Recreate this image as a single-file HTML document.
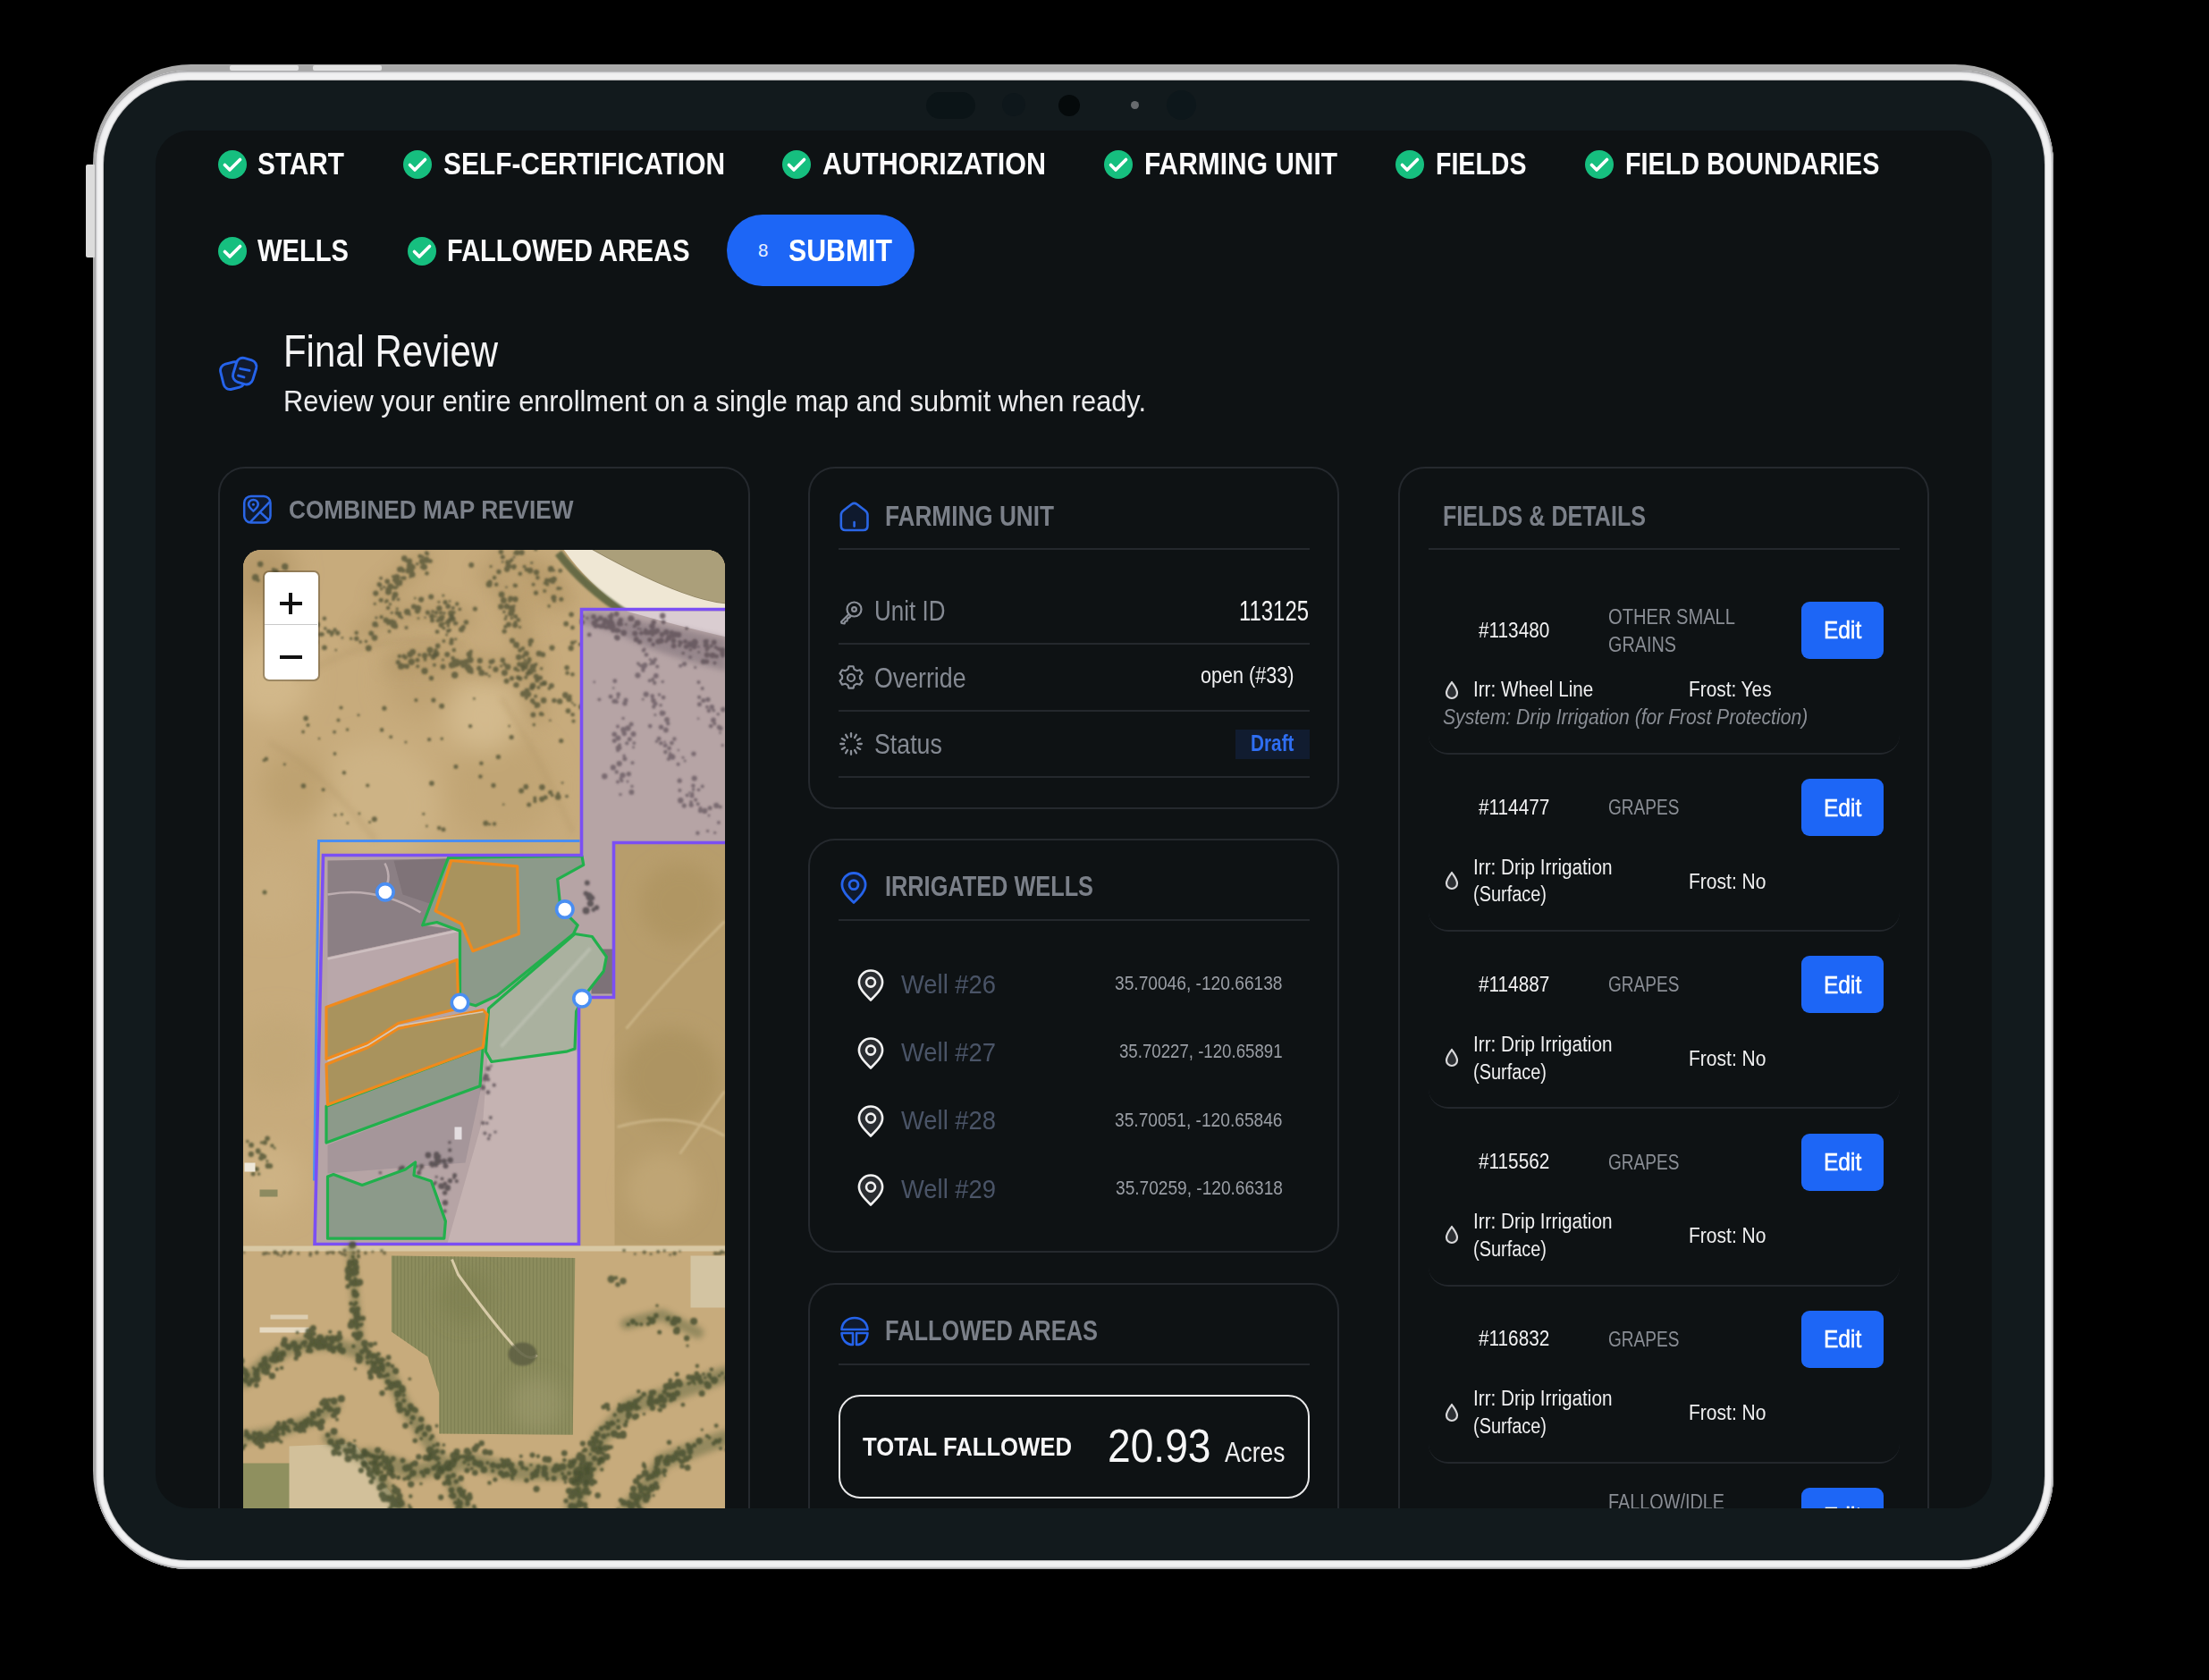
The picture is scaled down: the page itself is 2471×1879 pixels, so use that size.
<!DOCTYPE html>
<html><head><meta charset="utf-8"><style>
html,body{margin:0;padding:0}
body{width:2471px;height:1879px;background:#000;position:relative;overflow:hidden;font-family:"Liberation Sans", sans-serif}
.abs{position:absolute}
.t{position:absolute;white-space:nowrap;line-height:1;transform-origin:0 0}
#screen{position:absolute;left:174px;top:146px;width:2054px;height:1541px;border-radius:38px;background:#0e1214;overflow:hidden}
.card{position:absolute;border:2px solid #25292e;border-radius:30px;box-sizing:border-box}
.hr{position:absolute;height:2px;background:#24282d}
.chk{position:absolute;width:32px;height:32px;border-radius:50%;background:#16bf7f}
.chk svg{position:absolute;left:0;top:0}
.edit{position:absolute;width:92px;height:64px;border-radius:9px;background:#1d66f6}
</style></head><body>
<div class="abs" style="left:103.5px;top:72px;width:2193.5px;height:1683px;border-radius:110px;background:#ababab"></div>
<div class="abs" style="left:257px;top:73px;width:77px;height:6px;background:#e2e2e2;border-radius:2px"></div>
<div class="abs" style="left:350px;top:73px;width:77px;height:6px;background:#e2e2e2;border-radius:2px"></div>
<div class="abs" style="left:96px;top:184px;width:11px;height:104px;background:#dcdcdc;border-radius:2px"></div>
<div class="abs" style="left:105.5px;top:79px;width:2191.5px;height:1676px;border-radius:104px;background:#f1f1f2;box-shadow:inset 0 0 1px 1.5px #a5a5a7, inset 0 0 2px 3px #e2e2e4"></div>
<div class="abs" style="left:116px;top:89.5px;width:2170.5px;height:1655px;border-radius:94px;background:#121a1d;box-shadow:0 0 1px 1px #b8b8ba"></div>
<div class="abs" style="left:1036px;top:103px;width:55px;height:30px;border-radius:15px;background:#0b1417"></div>
<div class="abs" style="left:1121px;top:104px;width:26px;height:26px;border-radius:50%;background:#0e171b"></div>
<div class="abs" style="left:1184px;top:106px;width:24px;height:24px;border-radius:50%;background:#050a0b"></div>
<div class="abs" style="left:1264.5px;top:113px;width:9px;height:9px;border-radius:50%;background:#676b6e"></div>
<div class="abs" style="left:1304.5px;top:100.5px;width:33px;height:33px;border-radius:50%;background:#0d171b"></div>
<div id="screen">
<div class="chk" style="left:69.5px;top:22.0px"><svg width="32" height="32" viewBox="0 0 32 32"><path d="M7.5 16.5 L13 22 L24.5 10.5" fill="none" stroke="#fff" stroke-width="3.6" stroke-linecap="round" stroke-linejoin="round"/></svg></div>
<div class="t" id="s_start" style="left:114.4px;top:20.3px;font-size:34.50px;font-weight:700;color:#fbfbfc;transform:scaleX(0.8627);">START</div>
<div class="chk" style="left:276.6px;top:22.0px"><svg width="32" height="32" viewBox="0 0 32 32"><path d="M7.5 16.5 L13 22 L24.5 10.5" fill="none" stroke="#fff" stroke-width="3.6" stroke-linecap="round" stroke-linejoin="round"/></svg></div>
<div class="t" id="s_self" style="left:321.5px;top:20.3px;font-size:34.50px;font-weight:700;color:#fbfbfc;transform:scaleX(0.8666);">SELF-CERTIFICATION</div>
<div class="chk" style="left:701.0px;top:22.0px"><svg width="32" height="32" viewBox="0 0 32 32"><path d="M7.5 16.5 L13 22 L24.5 10.5" fill="none" stroke="#fff" stroke-width="3.6" stroke-linecap="round" stroke-linejoin="round"/></svg></div>
<div class="t" id="s_auth" style="left:746.0px;top:20.3px;font-size:34.50px;font-weight:700;color:#fbfbfc;transform:scaleX(0.8834);">AUTHORIZATION</div>
<div class="chk" style="left:1061.4px;top:22.0px"><svg width="32" height="32" viewBox="0 0 32 32"><path d="M7.5 16.5 L13 22 L24.5 10.5" fill="none" stroke="#fff" stroke-width="3.6" stroke-linecap="round" stroke-linejoin="round"/></svg></div>
<div class="t" id="s_farm" style="left:1106.3px;top:20.3px;font-size:34.50px;font-weight:700;color:#fbfbfc;transform:scaleX(0.8669);">FARMING UNIT</div>
<div class="chk" style="left:1387.4px;top:22.0px"><svg width="32" height="32" viewBox="0 0 32 32"><path d="M7.5 16.5 L13 22 L24.5 10.5" fill="none" stroke="#fff" stroke-width="3.6" stroke-linecap="round" stroke-linejoin="round"/></svg></div>
<div class="t" id="s_fields" style="left:1432.3px;top:20.3px;font-size:34.50px;font-weight:700;color:#fbfbfc;transform:scaleX(0.8274);">FIELDS</div>
<div class="chk" style="left:1598.5px;top:22.0px"><svg width="32" height="32" viewBox="0 0 32 32"><path d="M7.5 16.5 L13 22 L24.5 10.5" fill="none" stroke="#fff" stroke-width="3.6" stroke-linecap="round" stroke-linejoin="round"/></svg></div>
<div class="t" id="s_fb" style="left:1643.8px;top:20.3px;font-size:34.50px;font-weight:700;color:#fbfbfc;transform:scaleX(0.8336);">FIELD BOUNDARIES</div>
<div class="chk" style="left:69.5px;top:119.0px"><svg width="32" height="32" viewBox="0 0 32 32"><path d="M7.5 16.5 L13 22 L24.5 10.5" fill="none" stroke="#fff" stroke-width="3.6" stroke-linecap="round" stroke-linejoin="round"/></svg></div>
<div class="t" id="s_wells" style="left:114.4px;top:117.1px;font-size:34.50px;font-weight:700;color:#fbfbfc;transform:scaleX(0.8448);">WELLS</div>
<div class="chk" style="left:281.8px;top:119.0px"><svg width="32" height="32" viewBox="0 0 32 32"><path d="M7.5 16.5 L13 22 L24.5 10.5" fill="none" stroke="#fff" stroke-width="3.6" stroke-linecap="round" stroke-linejoin="round"/></svg></div>
<div class="t" id="s_fall" style="left:326.3px;top:117.1px;font-size:34.50px;font-weight:700;color:#fbfbfc;transform:scaleX(0.8418);">FALLOWED AREAS</div>
<div class="abs" style="left:638.6px;top:94.3px;width:210px;height:80px;border-radius:40px;background:#1d66f6"></div>
<div class="t" id="s_8" style="left:674.0px;top:124.2px;font-size:20.50px;font-weight:400;color:#e8efff;transform:scaleX(1.0000);">8</div>
<div class="t" id="s_submit" style="left:708.0px;top:117.1px;font-size:34.50px;font-weight:700;color:#ffffff;transform:scaleX(0.8771);">SUBMIT</div>
<svg class="abs" style="left:64px;top:242px" width="60" height="60" viewBox="0 0 60 60">
<g fill="none" stroke="#2563eb" stroke-width="2.9" stroke-linejoin="round" stroke-linecap="round">
<rect x="10.1" y="17.6" width="24" height="29" rx="7.5" transform="rotate(-14 22.1 32.1)" fill="#0f1a2e"/>
<rect x="24.2" y="13.1" width="23" height="28" rx="7.5" transform="rotate(17 35.7 27.1)" fill="#111a2e"/>
<path d="M30.7 24.3 L41 26.4 M28.6 32.1 L35 33.9"/>
</g></svg>
<div class="t" id="h_title" style="left:143.0px;top:222.3px;font-size:49.50px;font-weight:400;color:#f4f4f5;transform:scaleX(0.8470);">Final Review</div>
<div class="t" id="h_sub" style="left:143.0px;top:287.2px;font-size:32.50px;font-weight:400;color:#ececee;transform:scaleX(0.9460);">Review your entire enrollment on a single map and submit when ready.</div>
<div class="card" style="left:70.0px;top:376.0px;width:594.5px;height:1278.0px"></div>
<div class="card" style="left:729.5px;top:376.0px;width:594.5px;height:382.5px"></div>
<div class="card" style="left:729.5px;top:792.0px;width:594.5px;height:463.0px"></div>
<div class="card" style="left:729.5px;top:1289.0px;width:594.5px;height:365.0px"></div>
<div class="card" style="left:1389.5px;top:376.0px;width:594.5px;height:1278.0px"></div>
<svg class="abs" style="left:92px;top:402px" width="44" height="44" viewBox="0 0 44 44">
<g fill="none" stroke="#2a66e6" stroke-width="2.5" stroke-linejoin="round" stroke-linecap="round">
<rect x="7.2" y="7" width="29.3" height="29.5" rx="7.5" fill="#0f1a2e"/>
<path d="M17.4 23.6 C14 20.5 12.1 18.4 12.1 16.2 A5.3 5.3 0 0 1 22.7 16.2 C22.7 18.4 20.8 20.5 17.4 23.6 Z"/>
<path d="M14.1 35.9 L35.9 13.1 M25.1 24.9 L33.8 33"/>
</g><circle cx="17.4" cy="16.2" r="1.5" fill="#2a66e6"/></svg>
<div class="t" id="c_map" style="left:148.6px;top:408.5px;font-size:29.50px;font-weight:700;color:#7b8089;transform:scaleX(0.8889);">COMBINED MAP REVIEW</div>
<div id="map" class="abs" style="left:97.5px;top:468.5px;width:539px;height:1100px;border-radius:20px 20px 0 0;overflow:hidden;background:#c6ab7c"><svg width="539" height="1073" viewBox="0 0 539 1073" style="position:absolute;left:0;top:0"><defs><filter id="bl" x="-50%" y="-50%" width="200%" height="200%"><feGaussianBlur stdDeviation="14"/></filter><filter id="bl2" x="-10%" y="-10%" width="120%" height="120%"><feGaussianBlur stdDeviation="0.9"/></filter><filter id="bl3" x="-30%" y="-30%" width="160%" height="160%"><feGaussianBlur stdDeviation="3"/></filter><filter id="bl4" x="-30%" y="-30%" width="160%" height="160%"><feGaussianBlur stdDeviation="10"/></filter></defs><rect x="0" y="0" width="539" height="1073" fill="#c7ab7c"/><g filter="url(#bl)"><circle cx="18.5" cy="25.5" r="40" fill="#b69a6a"/><circle cx="28.5" cy="145.5" r="45" fill="#d2b88a"/><circle cx="148.5" cy="285.5" r="70" fill="#cdb385"/><circle cx="288.5" cy="265.5" r="60" fill="#c1a575"/><circle cx="268.5" cy="185.5" r="40" fill="#d3ba8d"/><circle cx="58.5" cy="265.5" r="40" fill="#bea271"/><circle cx="328.5" cy="45.5" r="30" fill="#c0a372"/><circle cx="198.5" cy="145.5" r="40" fill="#bfa373"/><circle cx="28.5" cy="385.5" r="40" fill="#c9ae80"/><circle cx="38.5" cy="565.5" r="45" fill="#c3a878"/><circle cx="28.5" cy="705.5" r="40" fill="#cdb284"/></g><g filter="url(#bl3)" stroke="#b09466" stroke-width="6" fill="none" opacity="0.3"><path d="M58.5,145.5 Q148.5,85.5 248.5,105.5"/><path d="M288.5,165.5 Q328.5,225.5 368.5,315.5"/><path d="M28.5,215.5 Q88.5,245.5 148.5,325.5"/></g><path d="M389.5,-0.5 L540.5,-0.5 L540.5,60.5 Q491.5,56.5 389.5,-0.5Z" fill="#ab9f7a"/><path d="M389.5,-0.5 Q491.5,56.5 540.5,60.5" fill="none" stroke="#8d8160" stroke-width="1.6"/><path d="M358.5,-0.5 L389.5,-0.5 Q491.5,56.5 540.5,60.5 L540.5,69.5 L428.5,69.5 Q383.5,35.5 358.5,-0.5Z" fill="#efe7d4"/><path d="M352.5,3.5 Q380.5,40.5 428.5,71.5" fill="none" stroke="#56603c" stroke-width="9" opacity="0.85" filter="url(#bl2)"/><g filter="url(#bl4)" fill="none" stroke="#a98e5e" stroke-linecap="round" opacity="0.45"><path d="M153.5,53.5 L178.5,30.5 L200.5,10.5" stroke-width="22"/><path d="M133.5,90.5 L168.5,75.5 L208.5,67.5 L248.5,77.5" stroke-width="22"/><path d="M168.5,125.5 L208.5,120.5 L248.5,127.5 L288.5,133.5 L328.5,127.5" stroke-width="22"/><path d="M273.5,25.5 L298.5,55.5 L313.5,100.5 L320.5,155.5 L328.5,185.5" stroke-width="22"/><path d="M288.5,5.5 L318.5,17.5 L343.5,35.5 L358.5,55.5" stroke-width="22"/></g><g filter="url(#bl2)"><g fill="#56563a" opacity="0.8"><circle cx="205.1" cy="3.6" r="2.3"/><circle cx="148.3" cy="48.5" r="3.1"/><circle cx="170.1" cy="50.0" r="3.3"/><circle cx="162.3" cy="44.5" r="3.0"/><circle cx="170.3" cy="37.0" r="1.4"/><circle cx="169.6" cy="33.6" r="2.7"/><circle cx="161.2" cy="35.2" r="2.8"/><circle cx="185.5" cy="22.3" r="3.4"/><circle cx="169.2" cy="41.9" r="2.0"/><circle cx="170.2" cy="42.6" r="2.0"/><circle cx="177.6" cy="31.3" r="1.8"/><circle cx="172.2" cy="41.8" r="1.5"/><circle cx="172.6" cy="38.6" r="2.1"/><circle cx="199.1" cy="18.9" r="1.5"/><circle cx="154.6" cy="43.7" r="1.7"/><circle cx="179.0" cy="23.6" r="2.2"/><circle cx="189.0" cy="27.5" r="3.5"/><circle cx="204.9" cy="11.1" r="3.6"/><circle cx="159.1" cy="58.5" r="1.3"/><circle cx="194.7" cy="15.7" r="1.8"/><circle cx="147.3" cy="60.3" r="1.6"/><circle cx="201.4" cy="19.1" r="2.7"/><circle cx="200.7" cy="7.5" r="1.7"/><circle cx="164.5" cy="42.9" r="1.5"/><circle cx="173.5" cy="55.4" r="1.8"/><circle cx="188.4" cy="16.9" r="2.0"/><circle cx="180.3" cy="31.6" r="2.4"/><circle cx="164.6" cy="44.7" r="1.3"/><circle cx="187.6" cy="24.4" r="1.9"/><circle cx="160.7" cy="57.2" r="2.1"/><circle cx="175.3" cy="36.3" r="2.1"/><circle cx="209.5" cy="12.6" r="2.4"/><circle cx="188.3" cy="24.1" r="2.6"/><circle cx="175.1" cy="21.9" r="3.1"/><circle cx="180.3" cy="9.6" r="3.3"/><circle cx="207.4" cy="13.2" r="1.3"/><circle cx="189.5" cy="23.1" r="1.5"/><circle cx="186.6" cy="22.9" r="2.2"/><circle cx="189.7" cy="19.2" r="3.0"/><circle cx="162.5" cy="47.1" r="3.5"/><circle cx="154.1" cy="31.7" r="1.9"/><circle cx="168.7" cy="52.6" r="2.5"/><circle cx="179.2" cy="22.6" r="2.1"/><circle cx="171.4" cy="31.9" r="3.4"/><circle cx="157.8" cy="41.6" r="1.6"/><circle cx="187.8" cy="22.3" r="1.4"/><circle cx="202.6" cy="19.2" r="3.4"/><circle cx="176.5" cy="21.5" r="2.9"/><circle cx="188.2" cy="19.1" r="2.7"/><circle cx="186.6" cy="30.6" r="1.3"/><circle cx="168.0" cy="55.3" r="1.9"/><circle cx="176.9" cy="34.8" r="1.6"/><circle cx="197.7" cy="7.1" r="2.4"/><circle cx="171.6" cy="28.4" r="1.4"/><circle cx="154.2" cy="56.2" r="2.5"/><circle cx="167.3" cy="29.7" r="1.5"/><circle cx="172.0" cy="30.7" r="3.4"/><circle cx="185.9" cy="12.7" r="3.2"/><circle cx="185.9" cy="17.4" r="3.0"/><circle cx="174.7" cy="37.0" r="3.5"/><circle cx="184.0" cy="24.0" r="2.5"/><circle cx="153.1" cy="39.6" r="2.4"/><circle cx="163.9" cy="43.0" r="1.4"/><circle cx="200.4" cy="12.8" r="3.6"/><circle cx="182.2" cy="12.4" r="1.5"/><circle cx="152.2" cy="38.6" r="2.6"/><circle cx="171.5" cy="34.0" r="2.0"/><circle cx="206.1" cy="4.4" r="2.0"/><circle cx="168.7" cy="29.8" r="1.8"/><circle cx="164.8" cy="40.9" r="3.5"/></g><g fill="#56563a" opacity="0.8"><circle cx="222.0" cy="70.1" r="1.6"/><circle cx="166.8" cy="84.1" r="2.3"/><circle cx="175.2" cy="74.0" r="2.3"/><circle cx="196.0" cy="76.6" r="1.4"/><circle cx="174.0" cy="72.8" r="1.7"/><circle cx="131.2" cy="102.9" r="1.9"/><circle cx="172.2" cy="70.6" r="2.5"/><circle cx="192.3" cy="54.1" r="1.4"/><circle cx="220.4" cy="70.8" r="1.8"/><circle cx="231.0" cy="78.3" r="2.5"/><circle cx="244.2" cy="89.1" r="3.2"/><circle cx="137.4" cy="102.4" r="1.8"/><circle cx="168.5" cy="81.6" r="3.0"/><circle cx="166.5" cy="80.0" r="2.5"/><circle cx="203.6" cy="75.7" r="1.3"/><circle cx="144.2" cy="93.5" r="2.1"/><circle cx="229.2" cy="63.1" r="2.9"/><circle cx="159.8" cy="78.7" r="3.1"/><circle cx="225.0" cy="70.8" r="1.7"/><circle cx="143.1" cy="93.4" r="2.8"/><circle cx="219.5" cy="65.4" r="3.1"/><circle cx="177.4" cy="75.7" r="1.8"/><circle cx="164.4" cy="60.7" r="1.7"/><circle cx="170.5" cy="85.8" r="2.7"/><circle cx="168.3" cy="84.4" r="3.1"/><circle cx="259.4" cy="66.0" r="2.6"/><circle cx="165.5" cy="81.4" r="1.9"/><circle cx="162.1" cy="64.9" r="2.2"/><circle cx="199.1" cy="55.6" r="3.1"/><circle cx="182.5" cy="87.0" r="2.0"/><circle cx="126.8" cy="99.3" r="2.7"/><circle cx="149.6" cy="84.8" r="1.8"/><circle cx="183.5" cy="69.3" r="3.6"/><circle cx="222.9" cy="75.1" r="2.6"/><circle cx="154.6" cy="75.1" r="2.2"/><circle cx="159.4" cy="78.1" r="1.9"/><circle cx="195.7" cy="65.3" r="3.5"/><circle cx="249.4" cy="81.0" r="2.8"/><circle cx="232.5" cy="71.0" r="3.4"/><circle cx="162.5" cy="81.8" r="2.5"/><circle cx="218.7" cy="65.3" r="2.5"/><circle cx="212.0" cy="68.9" r="1.9"/><circle cx="195.0" cy="68.3" r="3.1"/><circle cx="217.6" cy="79.1" r="2.2"/><circle cx="221.2" cy="76.9" r="3.5"/><circle cx="163.5" cy="91.1" r="1.9"/><circle cx="147.0" cy="98.3" r="3.4"/><circle cx="172.2" cy="65.9" r="1.6"/><circle cx="236.9" cy="82.4" r="2.1"/><circle cx="126.7" cy="92.8" r="2.3"/><circle cx="190.9" cy="63.5" r="3.0"/><circle cx="166.3" cy="70.3" r="1.6"/><circle cx="194.5" cy="63.9" r="1.9"/><circle cx="235.9" cy="69.8" r="1.9"/><circle cx="140.3" cy="110.0" r="3.4"/><circle cx="216.0" cy="70.3" r="2.3"/><circle cx="211.1" cy="74.2" r="3.0"/><circle cx="217.1" cy="91.6" r="2.4"/><circle cx="169.6" cy="84.8" r="3.2"/><circle cx="147.5" cy="83.3" r="3.2"/><circle cx="148.9" cy="75.9" r="1.6"/><circle cx="163.5" cy="80.2" r="2.6"/><circle cx="246.2" cy="86.4" r="2.6"/><circle cx="206.4" cy="70.1" r="2.6"/><circle cx="186.6" cy="72.4" r="1.3"/><circle cx="175.3" cy="71.0" r="2.0"/><circle cx="231.3" cy="89.7" r="1.8"/><circle cx="234.9" cy="77.7" r="2.9"/><circle cx="242.3" cy="66.4" r="1.9"/><circle cx="238.3" cy="82.1" r="2.2"/></g><g fill="#56563a" opacity="0.8"><circle cx="212.6" cy="119.7" r="3.0"/><circle cx="319.9" cy="122.0" r="2.3"/><circle cx="237.9" cy="124.7" r="3.2"/><circle cx="281.4" cy="134.7" r="1.7"/><circle cx="279.8" cy="123.0" r="1.5"/><circle cx="282.5" cy="133.7" r="3.1"/><circle cx="249.3" cy="125.1" r="3.2"/><circle cx="300.5" cy="143.7" r="2.6"/><circle cx="294.6" cy="146.8" r="3.0"/><circle cx="308.9" cy="128.0" r="2.8"/><circle cx="189.7" cy="114.2" r="3.4"/><circle cx="335.3" cy="117.2" r="2.9"/><circle cx="279.3" cy="124.8" r="2.4"/><circle cx="223.5" cy="130.7" r="3.0"/><circle cx="251.5" cy="131.4" r="3.7"/><circle cx="186.6" cy="117.2" r="1.7"/><circle cx="245.0" cy="125.6" r="2.5"/><circle cx="183.1" cy="130.2" r="2.8"/><circle cx="313.0" cy="134.3" r="2.0"/><circle cx="254.0" cy="123.1" r="3.7"/><circle cx="315.6" cy="129.1" r="3.7"/><circle cx="188.2" cy="125.3" r="3.7"/><circle cx="330.9" cy="116.0" r="3.3"/><circle cx="194.9" cy="123.2" r="2.5"/><circle cx="266.7" cy="137.5" r="3.5"/><circle cx="292.4" cy="137.4" r="3.5"/><circle cx="239.5" cy="124.7" r="2.6"/><circle cx="233.4" cy="128.8" r="3.6"/><circle cx="246.2" cy="129.0" r="3.1"/><circle cx="203.1" cy="118.3" r="3.2"/><circle cx="251.0" cy="131.9" r="3.0"/><circle cx="288.6" cy="129.9" r="1.7"/><circle cx="253.7" cy="134.4" r="3.8"/><circle cx="181.6" cy="120.6" r="2.3"/><circle cx="319.1" cy="125.5" r="2.4"/><circle cx="311.2" cy="130.1" r="1.6"/><circle cx="209.0" cy="112.0" r="3.6"/><circle cx="213.9" cy="128.7" r="2.0"/><circle cx="275.9" cy="131.0" r="1.8"/><circle cx="309.7" cy="143.9" r="2.7"/><circle cx="264.0" cy="132.4" r="2.9"/><circle cx="234.5" cy="121.0" r="2.3"/><circle cx="316.4" cy="132.6" r="1.7"/><circle cx="186.7" cy="117.0" r="3.4"/><circle cx="235.8" cy="112.1" r="2.3"/><circle cx="277.3" cy="125.2" r="2.8"/><circle cx="290.3" cy="123.4" r="2.8"/><circle cx="181.2" cy="129.8" r="2.4"/><circle cx="293.8" cy="137.3" r="1.6"/><circle cx="212.9" cy="120.9" r="1.9"/><circle cx="236.7" cy="140.0" r="3.8"/><circle cx="241.3" cy="126.2" r="3.2"/><circle cx="208.7" cy="117.2" r="2.1"/><circle cx="264.8" cy="123.9" r="3.1"/><circle cx="236.0" cy="124.4" r="2.7"/><circle cx="254.8" cy="113.6" r="2.1"/><circle cx="216.0" cy="116.2" r="3.5"/><circle cx="236.1" cy="129.0" r="2.8"/><circle cx="176.6" cy="130.2" r="3.6"/><circle cx="215.4" cy="112.6" r="2.3"/><circle cx="173.3" cy="125.7" r="2.6"/><circle cx="195.2" cy="130.2" r="2.0"/><circle cx="253.0" cy="116.9" r="3.3"/><circle cx="320.5" cy="123.1" r="2.3"/><circle cx="296.0" cy="131.0" r="3.4"/><circle cx="324.1" cy="130.9" r="3.6"/><circle cx="255.7" cy="136.9" r="2.1"/><circle cx="174.8" cy="119.0" r="2.2"/><circle cx="275.4" cy="140.9" r="1.5"/><circle cx="203.0" cy="135.5" r="3.7"/><circle cx="311.2" cy="128.5" r="2.1"/><circle cx="345.5" cy="109.6" r="3.1"/><circle cx="272.0" cy="138.7" r="1.9"/><circle cx="313.8" cy="128.3" r="3.3"/><circle cx="197.0" cy="117.6" r="2.0"/><circle cx="253.0" cy="134.3" r="2.4"/><circle cx="292.4" cy="127.9" r="2.1"/><circle cx="321.5" cy="135.8" r="3.6"/><circle cx="327.7" cy="141.5" r="3.0"/><circle cx="179.8" cy="119.0" r="2.5"/></g><g fill="#56563a" opacity="0.8"><circle cx="304.7" cy="74.4" r="2.5"/><circle cx="303.2" cy="62.4" r="1.5"/><circle cx="319.0" cy="161.6" r="3.3"/><circle cx="326.4" cy="135.5" r="1.5"/><circle cx="320.3" cy="102.7" r="1.9"/><circle cx="304.2" cy="84.2" r="3.1"/><circle cx="289.1" cy="49.9" r="3.4"/><circle cx="300.4" cy="65.3" r="3.6"/><circle cx="343.4" cy="190.8" r="1.3"/><circle cx="308.1" cy="134.8" r="1.7"/><circle cx="300.4" cy="76.5" r="1.7"/><circle cx="322.0" cy="101.8" r="3.0"/><circle cx="322.7" cy="153.8" r="1.4"/><circle cx="313.7" cy="118.4" r="2.0"/><circle cx="307.9" cy="78.4" r="2.3"/><circle cx="324.4" cy="184.6" r="3.0"/><circle cx="318.8" cy="137.8" r="2.4"/><circle cx="281.1" cy="31.1" r="2.3"/><circle cx="294.9" cy="63.2" r="3.2"/><circle cx="327.5" cy="175.6" r="1.6"/><circle cx="293.4" cy="77.3" r="1.8"/><circle cx="288.3" cy="63.5" r="3.2"/><circle cx="307.3" cy="142.7" r="2.5"/><circle cx="329.1" cy="173.5" r="3.2"/><circle cx="314.5" cy="161.4" r="1.8"/><circle cx="277.1" cy="18.5" r="1.6"/><circle cx="325.3" cy="171.1" r="2.2"/><circle cx="291.4" cy="56.5" r="3.5"/><circle cx="286.0" cy="24.5" r="2.7"/><circle cx="309.6" cy="112.5" r="2.4"/><circle cx="292.2" cy="91.1" r="2.7"/><circle cx="255.2" cy="17.1" r="3.0"/><circle cx="293.4" cy="85.9" r="2.2"/><circle cx="276.0" cy="36.1" r="2.6"/><circle cx="297.0" cy="83.4" r="3.0"/><circle cx="336.1" cy="168.4" r="3.3"/><circle cx="304.4" cy="81.0" r="1.9"/><circle cx="304.8" cy="133.1" r="2.5"/><circle cx="299.6" cy="71.1" r="3.5"/><circle cx="315.3" cy="123.3" r="1.6"/><circle cx="304.4" cy="151.5" r="2.2"/><circle cx="316.2" cy="142.6" r="2.2"/><circle cx="309.5" cy="86.4" r="1.6"/><circle cx="294.3" cy="74.2" r="1.6"/><circle cx="308.3" cy="120.1" r="3.3"/><circle cx="313.1" cy="131.3" r="2.5"/><circle cx="313.2" cy="120.0" r="1.8"/><circle cx="294.5" cy="41.8" r="1.3"/><circle cx="332.4" cy="143.2" r="2.6"/><circle cx="333.6" cy="132.7" r="1.8"/><circle cx="307.0" cy="108.9" r="1.4"/><circle cx="325.3" cy="195.6" r="1.8"/><circle cx="323.0" cy="154.2" r="2.9"/><circle cx="304.1" cy="39.9" r="2.4"/><circle cx="306.7" cy="135.0" r="1.4"/><circle cx="336.4" cy="149.6" r="1.9"/><circle cx="316.7" cy="165.7" r="2.0"/><circle cx="320.9" cy="106.0" r="2.2"/><circle cx="312.8" cy="110.4" r="2.4"/><circle cx="313.4" cy="161.0" r="3.5"/><circle cx="283.2" cy="38.7" r="2.3"/><circle cx="305.5" cy="106.2" r="3.5"/><circle cx="327.1" cy="163.8" r="2.0"/><circle cx="327.6" cy="128.0" r="1.9"/><circle cx="318.3" cy="138.3" r="2.6"/><circle cx="305.6" cy="151.1" r="3.1"/><circle cx="275.1" cy="38.6" r="3.5"/><circle cx="316.6" cy="116.0" r="3.2"/><circle cx="300.9" cy="67.8" r="3.2"/><circle cx="298.1" cy="57.1" r="2.0"/><circle cx="322.7" cy="154.2" r="1.8"/><circle cx="299.1" cy="54.6" r="3.0"/><circle cx="305.1" cy="40.0" r="2.0"/><circle cx="323.6" cy="168.8" r="2.7"/><circle cx="333.2" cy="183.6" r="2.5"/><circle cx="317.4" cy="157.3" r="2.9"/><circle cx="304.4" cy="55.2" r="3.2"/><circle cx="334.9" cy="184.1" r="1.9"/><circle cx="291.9" cy="69.4" r="1.8"/><circle cx="301.0" cy="101.5" r="3.1"/></g><g fill="#56563a" opacity="0.8"><circle cx="295.8" cy="14.0" r="2.7"/><circle cx="344.0" cy="34.1" r="2.8"/><circle cx="316.9" cy="22.1" r="2.4"/><circle cx="311.6" cy="2.9" r="3.1"/><circle cx="295.1" cy="21.7" r="3.1"/><circle cx="322.8" cy="14.5" r="1.6"/><circle cx="346.3" cy="35.0" r="3.0"/><circle cx="306.3" cy="3.1" r="3.2"/><circle cx="337.7" cy="37.2" r="1.9"/><circle cx="341.7" cy="34.4" r="1.8"/><circle cx="315.0" cy="18.3" r="1.6"/><circle cx="314.2" cy="18.8" r="1.7"/><circle cx="327.3" cy="-1.0" r="2.2"/><circle cx="303.4" cy="3.9" r="1.4"/><circle cx="355.2" cy="43.1" r="1.7"/><circle cx="347.7" cy="32.8" r="3.1"/><circle cx="354.7" cy="23.3" r="2.4"/><circle cx="337.2" cy="46.1" r="2.0"/><circle cx="352.4" cy="43.2" r="2.1"/><circle cx="348.0" cy="56.7" r="2.3"/><circle cx="344.2" cy="21.4" r="3.4"/><circle cx="303.3" cy="18.2" r="2.2"/><circle cx="339.4" cy="33.6" r="2.1"/><circle cx="327.5" cy="48.1" r="2.6"/><circle cx="324.6" cy="38.8" r="2.0"/><circle cx="297.4" cy="13.0" r="1.4"/><circle cx="303.0" cy="8.1" r="1.5"/><circle cx="300.3" cy="11.3" r="2.1"/><circle cx="296.8" cy="18.2" r="3.3"/><circle cx="290.3" cy="8.1" r="2.5"/><circle cx="342.1" cy="62.9" r="1.8"/><circle cx="347.8" cy="23.2" r="1.4"/><circle cx="340.2" cy="38.6" r="2.1"/><circle cx="288.4" cy="2.2" r="2.7"/><circle cx="302.8" cy="19.1" r="2.8"/><circle cx="328.0" cy="25.2" r="3.1"/><circle cx="347.4" cy="53.4" r="3.1"/><circle cx="339.6" cy="34.7" r="2.4"/><circle cx="298.9" cy="13.6" r="1.4"/><circle cx="321.0" cy="23.1" r="3.4"/><circle cx="355.8" cy="55.2" r="2.5"/><circle cx="329.4" cy="31.1" r="2.3"/><circle cx="305.1" cy="2.1" r="1.6"/><circle cx="290.2" cy="13.4" r="1.4"/><circle cx="309.8" cy="26.7" r="2.3"/></g><g fill="#56563a" opacity="0.8"><circle cx="86.6" cy="94.6" r="2.5"/><circle cx="49.2" cy="82.0" r="3.0"/><circle cx="90.9" cy="76.7" r="2.3"/><circle cx="86.8" cy="93.7" r="1.5"/><circle cx="91.8" cy="87.9" r="1.8"/><circle cx="81.1" cy="103.2" r="2.5"/><circle cx="95.7" cy="91.2" r="2.5"/><circle cx="83.1" cy="83.6" r="2.9"/><circle cx="120.7" cy="99.3" r="1.7"/><circle cx="72.5" cy="87.1" r="2.2"/><circle cx="66.5" cy="87.0" r="2.5"/><circle cx="105.7" cy="93.0" r="2.7"/><circle cx="110.9" cy="98.3" r="1.4"/><circle cx="102.6" cy="89.5" r="2.2"/><circle cx="79.6" cy="99.9" r="1.7"/><circle cx="71.6" cy="75.1" r="2.9"/><circle cx="88.9" cy="94.6" r="2.1"/><circle cx="79.6" cy="85.5" r="1.8"/><circle cx="103.7" cy="112.1" r="1.3"/><circle cx="51.4" cy="83.3" r="2.9"/><circle cx="90.9" cy="109.3" r="2.9"/><circle cx="88.7" cy="93.7" r="1.5"/><circle cx="99.4" cy="92.8" r="2.6"/><circle cx="80.3" cy="88.1" r="1.6"/><circle cx="98.9" cy="95.4" r="1.7"/></g><g fill="#56563a" opacity="0.8"><circle cx="347.9" cy="168.4" r="2.7"/><circle cx="365.6" cy="163.6" r="2.1"/><circle cx="337.0" cy="149.1" r="3.0"/><circle cx="360.4" cy="162.3" r="3.3"/><circle cx="378.2" cy="175.6" r="3.2"/><circle cx="380.7" cy="173.6" r="3.3"/><circle cx="324.1" cy="151.8" r="3.3"/><circle cx="333.9" cy="149.9" r="2.5"/><circle cx="342.4" cy="155.1" r="2.0"/><circle cx="333.9" cy="150.4" r="1.8"/><circle cx="364.6" cy="167.1" r="3.2"/><circle cx="328.8" cy="146.0" r="2.6"/><circle cx="344.9" cy="152.0" r="3.0"/><circle cx="359.7" cy="164.1" r="1.5"/><circle cx="363.5" cy="180.1" r="2.9"/><circle cx="370.8" cy="173.5" r="1.5"/><circle cx="354.2" cy="169.4" r="3.2"/><circle cx="330.4" cy="153.9" r="2.1"/><circle cx="359.3" cy="164.3" r="1.5"/><circle cx="361.7" cy="165.0" r="1.5"/><circle cx="381.5" cy="184.6" r="2.4"/><circle cx="368.2" cy="171.1" r="1.4"/><circle cx="368.6" cy="184.2" r="2.3"/><circle cx="337.0" cy="149.3" r="2.7"/><circle cx="369.5" cy="191.6" r="2.1"/></g><g fill="#56563a" opacity="0.8"><circle cx="227.7" cy="95.0" r="1.6"/><circle cx="218.9" cy="58.3" r="1.5"/><circle cx="233.2" cy="100.7" r="2.5"/><circle cx="223.5" cy="122.9" r="1.5"/><circle cx="221.4" cy="84.0" r="2.9"/><circle cx="239.6" cy="129.4" r="1.4"/><circle cx="231.1" cy="57.4" r="1.3"/><circle cx="234.8" cy="65.0" r="2.1"/><circle cx="223.8" cy="51.0" r="1.6"/><circle cx="228.2" cy="116.9" r="3.0"/><circle cx="233.3" cy="75.0" r="2.9"/><circle cx="211.5" cy="79.0" r="2.5"/><circle cx="229.2" cy="90.7" r="2.3"/><circle cx="210.2" cy="52.4" r="3.0"/><circle cx="224.4" cy="87.5" r="2.1"/><circle cx="214.7" cy="117.5" r="2.9"/><circle cx="224.4" cy="102.1" r="2.0"/><circle cx="217.7" cy="107.4" r="2.8"/><circle cx="226.1" cy="58.5" r="2.6"/><circle cx="215.7" cy="74.6" r="1.4"/><circle cx="224.4" cy="82.4" r="1.7"/><circle cx="239.2" cy="60.5" r="2.2"/><circle cx="232.8" cy="104.1" r="2.6"/><circle cx="205.5" cy="26.2" r="2.3"/><circle cx="203.5" cy="122.7" r="2.0"/><circle cx="229.4" cy="85.2" r="1.7"/><circle cx="229.0" cy="80.9" r="3.0"/><circle cx="210.5" cy="143.5" r="2.7"/><circle cx="237.8" cy="99.7" r="1.5"/><circle cx="221.7" cy="85.1" r="1.9"/></g><g fill="#56563a" opacity="0.8"><circle cx="109.5" cy="176.5" r="2.1"/><circle cx="116.6" cy="201.1" r="1.8"/><circle cx="201.8" cy="295.3" r="1.6"/><circle cx="237.9" cy="242.5" r="2.5"/><circle cx="210.9" cy="261.1" r="2.9"/><circle cx="297.6" cy="197.1" r="1.4"/><circle cx="355.7" cy="213.5" r="2.6"/><circle cx="102.5" cy="228.0" r="1.9"/><circle cx="281.0" cy="306.5" r="2.2"/><circle cx="222.3" cy="211.3" r="1.7"/><circle cx="357.1" cy="260.6" r="1.4"/><circle cx="222.1" cy="174.7" r="3.0"/><circle cx="129.9" cy="295.0" r="1.4"/><circle cx="258.4" cy="166.4" r="1.4"/><circle cx="224.0" cy="312.7" r="2.5"/><circle cx="326.4" cy="281.1" r="2.2"/><circle cx="46.3" cy="239.8" r="1.6"/><circle cx="208.1" cy="212.2" r="2.1"/><circle cx="89.6" cy="268.3" r="2.0"/><circle cx="193.4" cy="168.1" r="2.1"/><circle cx="219.2" cy="311.1" r="2.3"/><circle cx="67.1" cy="203.5" r="1.9"/><circle cx="271.3" cy="305.7" r="3.0"/><circle cx="25.8" cy="233.9" r="2.3"/><circle cx="265.4" cy="253.5" r="2.3"/><circle cx="205.4" cy="309.0" r="1.4"/><circle cx="266.4" cy="238.7" r="2.3"/><circle cx="291.2" cy="284.7" r="1.3"/><circle cx="165.2" cy="209.2" r="1.9"/><circle cx="112.9" cy="249.2" r="2.2"/><circle cx="139.2" cy="263.5" r="2.1"/><circle cx="102.9" cy="296.6" r="1.6"/><circle cx="72.5" cy="196.0" r="2.1"/><circle cx="300.6" cy="208.8" r="1.7"/><circle cx="254.1" cy="197.1" r="2.2"/><circle cx="110.3" cy="295.8" r="1.6"/><circle cx="102.1" cy="203.7" r="1.9"/><circle cx="280.0" cy="263.4" r="2.6"/><circle cx="212.9" cy="168.1" r="2.6"/><circle cx="106.5" cy="190.4" r="2.0"/><circle cx="146.8" cy="301.3" r="3.0"/><circle cx="157.9" cy="177.2" r="2.6"/><circle cx="300.1" cy="209.6" r="2.6"/><circle cx="155.1" cy="201.4" r="2.3"/><circle cx="285.4" cy="231.6" r="2.7"/><circle cx="23.5" cy="235.3" r="1.9"/><circle cx="70.1" cy="188.4" r="2.8"/><circle cx="141.6" cy="304.4" r="1.5"/><circle cx="275.7" cy="306.8" r="1.6"/><circle cx="67.4" cy="264.0" r="2.8"/><circle cx="181.9" cy="215.1" r="1.5"/><circle cx="116.8" cy="305.7" r="1.4"/><circle cx="85.0" cy="211.1" r="1.4"/><circle cx="129.0" cy="184.8" r="1.5"/></g><g fill="#56563a" opacity="0.8"><circle cx="338.1" cy="276.8" r="2.6"/><circle cx="352.2" cy="276.4" r="3.3"/><circle cx="311.1" cy="269.4" r="3.0"/><circle cx="362.0" cy="275.6" r="1.9"/><circle cx="326.3" cy="277.7" r="2.1"/><circle cx="334.1" cy="278.8" r="3.1"/><circle cx="334.4" cy="265.6" r="3.3"/><circle cx="352.3" cy="272.3" r="1.7"/><circle cx="316.3" cy="265.0" r="2.9"/><circle cx="319.7" cy="285.1" r="2.5"/><circle cx="345.7" cy="274.4" r="1.9"/><circle cx="343.6" cy="271.3" r="2.5"/></g><g fill="#56563a" opacity="0.8"><circle cx="34.0" cy="22.5" r="2.4"/><circle cx="45.4" cy="34.1" r="2.5"/><circle cx="30.3" cy="28.8" r="2.3"/><circle cx="46.7" cy="18.8" r="3.7"/><circle cx="13.7" cy="30.9" r="3.8"/><circle cx="19.2" cy="16.0" r="3.2"/><circle cx="16.8" cy="34.2" r="1.9"/><circle cx="48.2" cy="21.0" r="1.8"/><circle cx="36.7" cy="23.8" r="2.8"/></g><g fill="#56563a" opacity="0.8"><circle cx="368.4" cy="139.3" r="2.3"/><circle cx="368.4" cy="87.0" r="2.4"/><circle cx="371.7" cy="102.5" r="1.5"/><circle cx="368.4" cy="104.0" r="2.5"/><circle cx="367.1" cy="72.3" r="2.8"/><circle cx="362.1" cy="131.8" r="2.8"/><circle cx="362.6" cy="137.7" r="2.3"/><circle cx="366.7" cy="109.9" r="3.1"/><circle cx="368.3" cy="104.1" r="1.9"/><circle cx="376.7" cy="105.7" r="2.0"/><circle cx="361.2" cy="82.7" r="2.9"/></g></g><rect x="415.5" y="327.5" width="130" height="450" fill="#b79d6c"/><g filter="url(#bl4)"><circle cx="478.5" cy="590.5" r="55" fill="#ad9462"/><circle cx="488.5" cy="395.5" r="45" fill="#b09663"/><circle cx="468.5" cy="715.5" r="40" fill="#bfa575"/></g><g stroke="#cdb78a" stroke-width="3" fill="none" opacity="0.8" filter="url(#bl2)"><path d="M428.5,535.5 Q478.5,475.5 538.5,415.5"/><path d="M488.5,675.5 L538.5,605.5"/><path d="M418.5,645.5 Q488.5,625.5 538.5,655.5"/></g><polygon points="378.5,66.5 543.5,66.5 543.5,327.5 414.5,327.5 414.5,500.5 375.5,500.5 375.5,776.5 80.0,776.5 89.5,341.5 378.5,341.5" fill="#b6a4a5"/><path d="M428.5,68.5 L540.5,68.5 L540.5,97.5 Q488.5,85.5 428.5,68.5Z" fill="#dacdd1"/><path d="M381.5,69.5 Q475.5,83.5 540.5,99.5 L540.5,135.5 Q458.5,115.5 418.5,93.5 Q393.5,85.5 381.5,83.5Z" fill="#8a7c82" opacity="0.7" filter="url(#bl3)"/><g filter="url(#bl2)"><g fill="#615359" opacity="0.8"><circle cx="417.6" cy="71.8" r="3.0"/><circle cx="377.8" cy="78.4" r="1.4"/><circle cx="422.2" cy="78.4" r="2.7"/><circle cx="544.2" cy="114.3" r="1.4"/><circle cx="488.1" cy="106.9" r="2.1"/><circle cx="433.7" cy="76.7" r="3.4"/><circle cx="518.7" cy="102.0" r="2.2"/><circle cx="470.1" cy="80.8" r="2.5"/><circle cx="453.6" cy="93.5" r="2.0"/><circle cx="403.8" cy="84.3" r="1.8"/><circle cx="523.7" cy="107.4" r="2.0"/><circle cx="468.5" cy="94.7" r="2.9"/><circle cx="412.2" cy="72.0" r="1.9"/><circle cx="528.6" cy="108.9" r="2.0"/><circle cx="442.0" cy="88.0" r="1.5"/><circle cx="500.3" cy="111.8" r="1.8"/><circle cx="420.6" cy="90.5" r="2.1"/><circle cx="425.8" cy="92.9" r="3.3"/><circle cx="514.8" cy="125.1" r="3.0"/><circle cx="379.3" cy="81.1" r="2.9"/><circle cx="536.0" cy="112.3" r="3.3"/><circle cx="520.6" cy="109.8" r="1.7"/><circle cx="418.7" cy="98.5" r="3.0"/><circle cx="518.5" cy="125.0" r="2.7"/><circle cx="499.8" cy="106.0" r="3.3"/><circle cx="428.3" cy="83.5" r="1.4"/><circle cx="441.2" cy="81.8" r="3.4"/><circle cx="456.9" cy="85.3" r="2.7"/><circle cx="529.5" cy="119.0" r="2.5"/><circle cx="384.7" cy="76.3" r="1.5"/><circle cx="461.5" cy="91.0" r="1.8"/><circle cx="503.5" cy="105.5" r="3.4"/><circle cx="411.8" cy="80.7" r="2.8"/><circle cx="492.2" cy="115.6" r="1.8"/><circle cx="409.0" cy="84.7" r="2.2"/><circle cx="450.6" cy="92.2" r="3.1"/><circle cx="518.8" cy="117.5" r="3.1"/><circle cx="457.8" cy="86.0" r="3.0"/><circle cx="477.3" cy="98.4" r="1.8"/><circle cx="531.6" cy="110.7" r="2.2"/><circle cx="494.6" cy="102.6" r="2.5"/><circle cx="499.4" cy="104.1" r="2.2"/><circle cx="437.7" cy="85.4" r="2.1"/><circle cx="409.6" cy="86.3" r="1.4"/><circle cx="413.9" cy="89.8" r="2.8"/><circle cx="461.1" cy="91.9" r="2.8"/><circle cx="504.6" cy="108.2" r="2.9"/><circle cx="496.1" cy="88.0" r="1.9"/><circle cx="505.7" cy="103.6" r="3.2"/><circle cx="458.6" cy="105.8" r="2.2"/><circle cx="395.4" cy="78.8" r="2.5"/><circle cx="463.2" cy="90.5" r="2.9"/><circle cx="379.8" cy="74.4" r="2.1"/><circle cx="399.6" cy="85.8" r="2.4"/><circle cx="402.1" cy="85.2" r="3.0"/><circle cx="537.5" cy="115.4" r="1.7"/><circle cx="423.4" cy="83.4" r="1.7"/><circle cx="404.9" cy="78.8" r="3.0"/><circle cx="435.9" cy="77.6" r="2.0"/><circle cx="421.1" cy="82.4" r="3.2"/><circle cx="489.3" cy="103.8" r="2.5"/><circle cx="527.5" cy="126.4" r="2.0"/><circle cx="474.8" cy="100.1" r="2.5"/><circle cx="399.7" cy="76.3" r="2.9"/><circle cx="473.1" cy="102.6" r="1.8"/><circle cx="526.8" cy="103.5" r="2.9"/><circle cx="509.5" cy="108.4" r="1.4"/><circle cx="458.0" cy="95.1" r="2.1"/><circle cx="410.4" cy="74.4" r="2.5"/><circle cx="411.4" cy="76.4" r="2.3"/><circle cx="444.8" cy="88.8" r="1.3"/><circle cx="450.1" cy="89.7" r="2.2"/><circle cx="405.9" cy="87.0" r="2.3"/><circle cx="476.4" cy="97.8" r="3.1"/><circle cx="505.0" cy="102.6" r="3.0"/><circle cx="445.3" cy="93.2" r="2.4"/><circle cx="394.3" cy="85.0" r="2.7"/><circle cx="410.4" cy="86.2" r="3.1"/><circle cx="516.7" cy="102.4" r="2.3"/><circle cx="454.9" cy="100.6" r="2.7"/><circle cx="387.2" cy="94.9" r="2.4"/><circle cx="518.6" cy="111.7" r="2.0"/><circle cx="418.1" cy="90.0" r="3.0"/><circle cx="525.1" cy="118.0" r="3.3"/><circle cx="455.8" cy="91.9" r="2.8"/><circle cx="412.9" cy="74.0" r="1.8"/><circle cx="469.2" cy="73.8" r="3.2"/><circle cx="481.5" cy="108.0" r="1.8"/><circle cx="392.8" cy="82.0" r="3.2"/><circle cx="481.2" cy="95.7" r="3.0"/><circle cx="495.6" cy="108.2" r="2.8"/><circle cx="487.7" cy="102.4" r="1.6"/><circle cx="473.3" cy="92.0" r="3.2"/><circle cx="483.5" cy="94.5" r="3.3"/><circle cx="417.7" cy="97.7" r="2.7"/><circle cx="467.5" cy="101.6" r="3.3"/><circle cx="409.5" cy="86.0" r="1.5"/><circle cx="438.3" cy="93.5" r="3.1"/><circle cx="479.2" cy="92.7" r="2.8"/><circle cx="505.5" cy="105.2" r="2.5"/><circle cx="409.0" cy="81.3" r="3.4"/><circle cx="443.5" cy="102.9" r="2.7"/><circle cx="481.4" cy="101.6" r="2.9"/><circle cx="509.7" cy="114.5" r="1.4"/><circle cx="536.5" cy="118.3" r="2.3"/><circle cx="459.2" cy="81.1" r="2.8"/><circle cx="404.4" cy="81.3" r="2.6"/><circle cx="392.0" cy="74.8" r="2.8"/><circle cx="409.1" cy="74.7" r="1.4"/><circle cx="397.1" cy="84.7" r="2.2"/><circle cx="414.4" cy="85.6" r="2.4"/><circle cx="440.6" cy="98.5" r="1.5"/><circle cx="414.2" cy="82.6" r="1.7"/><circle cx="464.3" cy="102.5" r="3.1"/><circle cx="459.1" cy="90.6" r="2.1"/><circle cx="536.1" cy="116.2" r="2.7"/><circle cx="439.6" cy="100.2" r="2.9"/><circle cx="517.8" cy="106.7" r="3.1"/><circle cx="481.6" cy="107.4" r="2.9"/><circle cx="487.0" cy="95.0" r="3.2"/></g></g><g filter="url(#bl2)"><g fill="#6b5d64" opacity="0.8"><circle cx="504.7" cy="255.5" r="3.1"/><circle cx="458.9" cy="168.6" r="2.8"/><circle cx="448.0" cy="130.3" r="3.1"/><circle cx="489.3" cy="280.2" r="3.2"/><circle cx="467.3" cy="216.3" r="2.3"/><circle cx="471.6" cy="214.9" r="1.3"/><circle cx="447.4" cy="134.8" r="2.2"/><circle cx="447.9" cy="112.4" r="2.2"/><circle cx="531.9" cy="305.0" r="1.9"/><circle cx="503.4" cy="263.8" r="2.3"/><circle cx="460.9" cy="184.5" r="1.5"/><circle cx="455.2" cy="197.1" r="2.3"/><circle cx="457.5" cy="165.4" r="1.4"/><circle cx="465.5" cy="162.0" r="1.8"/><circle cx="492.0" cy="232.3" r="1.5"/><circle cx="461.8" cy="140.8" r="2.9"/><circle cx="474.0" cy="189.9" r="2.9"/><circle cx="488.4" cy="268.9" r="2.0"/><circle cx="501.2" cy="285.3" r="2.6"/><circle cx="482.4" cy="211.5" r="2.2"/><circle cx="458.4" cy="125.8" r="3.0"/><circle cx="470.1" cy="182.6" r="2.5"/><circle cx="460.2" cy="148.7" r="2.2"/><circle cx="508.4" cy="316.8" r="2.2"/><circle cx="521.0" cy="297.0" r="1.5"/><circle cx="533.7" cy="287.5" r="2.1"/><circle cx="502.0" cy="274.9" r="2.5"/><circle cx="486.9" cy="224.0" r="1.3"/><circle cx="468.7" cy="182.8" r="3.0"/><circle cx="458.2" cy="144.1" r="1.6"/><circle cx="463.2" cy="130.5" r="2.1"/><circle cx="460.9" cy="122.6" r="2.2"/><circle cx="475.2" cy="194.3" r="2.2"/><circle cx="499.4" cy="271.6" r="1.4"/><circle cx="467.5" cy="198.2" r="2.7"/><circle cx="457.8" cy="163.5" r="2.3"/><circle cx="473.1" cy="218.2" r="1.6"/><circle cx="488.2" cy="258.2" r="2.6"/><circle cx="468.1" cy="181.1" r="1.6"/><circle cx="508.7" cy="284.3" r="2.0"/><circle cx="457.1" cy="163.0" r="1.5"/><circle cx="506.1" cy="279.6" r="2.1"/><circle cx="476.6" cy="221.9" r="2.4"/><circle cx="486.6" cy="239.7" r="2.0"/><circle cx="449.5" cy="128.9" r="2.8"/><circle cx="480.2" cy="231.6" r="3.2"/><circle cx="455.4" cy="127.7" r="1.5"/><circle cx="446.7" cy="130.5" r="1.9"/><circle cx="519.6" cy="314.4" r="1.7"/><circle cx="494.2" cy="235.9" r="1.5"/><circle cx="441.9" cy="127.1" r="1.9"/><circle cx="511.4" cy="291.7" r="2.5"/><circle cx="451.0" cy="117.3" r="2.4"/><circle cx="458.3" cy="145.6" r="1.9"/><circle cx="503.9" cy="228.1" r="2.7"/><circle cx="455.3" cy="122.7" r="1.6"/><circle cx="522.1" cy="288.8" r="2.5"/><circle cx="502.8" cy="272.1" r="1.6"/><circle cx="479.4" cy="216.1" r="2.4"/><circle cx="471.9" cy="218.9" r="2.2"/><circle cx="503.6" cy="268.1" r="1.8"/><circle cx="459.3" cy="175.5" r="2.2"/><circle cx="465.1" cy="211.2" r="2.4"/><circle cx="513.7" cy="264.4" r="2.0"/><circle cx="461.0" cy="172.0" r="2.6"/><circle cx="527.7" cy="316.3" r="1.6"/><circle cx="472.9" cy="201.5" r="2.9"/><circle cx="472.4" cy="226.1" r="2.3"/><circle cx="475.8" cy="234.1" r="2.0"/><circle cx="529.3" cy="285.9" r="3.1"/><circle cx="450.7" cy="161.5" r="3.1"/><circle cx="454.7" cy="146.3" r="2.0"/><circle cx="447.0" cy="133.2" r="1.6"/><circle cx="511.5" cy="289.0" r="2.1"/><circle cx="469.2" cy="147.4" r="1.7"/><circle cx="509.5" cy="268.3" r="1.9"/><circle cx="516.3" cy="291.9" r="3.1"/><circle cx="441.4" cy="140.3" r="3.1"/><circle cx="462.5" cy="214.3" r="1.7"/><circle cx="493.3" cy="286.1" r="2.6"/><circle cx="447.2" cy="167.2" r="1.4"/><circle cx="478.4" cy="230.7" r="3.1"/><circle cx="501.0" cy="282.0" r="1.9"/><circle cx="467.1" cy="173.7" r="1.8"/><circle cx="477.4" cy="226.9" r="1.3"/><circle cx="444.1" cy="129.3" r="1.8"/><circle cx="448.8" cy="111.1" r="1.8"/><circle cx="516.2" cy="293.3" r="1.3"/><circle cx="470.1" cy="165.1" r="2.4"/><circle cx="496.6" cy="274.5" r="2.0"/></g><g fill="#6b5d64" opacity="0.8"><circle cx="417.8" cy="248.4" r="2.2"/><circle cx="424.5" cy="252.1" r="3.2"/><circle cx="419.7" cy="161.7" r="2.4"/><circle cx="411.1" cy="164.2" r="2.4"/><circle cx="436.6" cy="220.8" r="1.5"/><circle cx="426.1" cy="230.2" r="1.7"/><circle cx="419.8" cy="221.5" r="3.1"/><circle cx="425.3" cy="201.1" r="3.1"/><circle cx="422.1" cy="221.5" r="1.6"/><circle cx="423.4" cy="258.1" r="2.1"/><circle cx="419.0" cy="197.6" r="2.0"/><circle cx="413.9" cy="243.4" r="3.1"/><circle cx="422.2" cy="255.8" r="1.8"/><circle cx="415.2" cy="213.4" r="2.5"/><circle cx="425.1" cy="188.4" r="1.7"/><circle cx="430.0" cy="259.0" r="1.5"/><circle cx="419.2" cy="165.3" r="1.5"/><circle cx="426.3" cy="205.5" r="2.7"/><circle cx="431.3" cy="250.7" r="2.6"/><circle cx="435.0" cy="264.4" r="1.7"/><circle cx="415.0" cy="169.3" r="2.6"/><circle cx="431.5" cy="200.1" r="1.4"/><circle cx="419.0" cy="259.5" r="2.0"/><circle cx="404.3" cy="253.3" r="3.2"/><circle cx="429.2" cy="216.3" r="2.1"/><circle cx="426.9" cy="171.8" r="2.7"/><circle cx="425.6" cy="202.4" r="2.6"/><circle cx="434.4" cy="270.9" r="3.0"/><circle cx="415.8" cy="146.7" r="2.4"/><circle cx="428.0" cy="167.9" r="2.5"/><circle cx="426.9" cy="233.8" r="2.5"/><circle cx="436.5" cy="206.1" r="3.0"/><circle cx="420.7" cy="239.1" r="3.1"/><circle cx="434.1" cy="194.9" r="2.5"/><circle cx="435.5" cy="238.2" r="1.9"/><circle cx="415.3" cy="206.2" r="2.8"/><circle cx="414.2" cy="154.5" r="1.3"/><circle cx="437.3" cy="216.1" r="1.9"/><circle cx="417.9" cy="170.1" r="2.1"/><circle cx="392.8" cy="147.8" r="1.4"/><circle cx="422.0" cy="273.6" r="1.7"/><circle cx="398.4" cy="167.3" r="1.9"/><circle cx="420.0" cy="238.9" r="2.1"/><circle cx="430.4" cy="199.4" r="3.2"/><circle cx="415.7" cy="168.8" r="1.5"/><circle cx="432.3" cy="211.7" r="2.5"/><circle cx="419.1" cy="224.3" r="2.0"/><circle cx="421.0" cy="218.3" r="2.0"/><circle cx="416.7" cy="168.1" r="1.6"/><circle cx="419.5" cy="210.5" r="3.0"/></g><g fill="#6b5d64" opacity="0.8"><circle cx="519.9" cy="167.4" r="2.7"/><circle cx="509.5" cy="148.1" r="2.1"/><circle cx="493.6" cy="127.6" r="2.7"/><circle cx="500.1" cy="120.1" r="2.1"/><circle cx="523.2" cy="197.1" r="2.4"/><circle cx="514.7" cy="168.6" r="2.5"/><circle cx="526.3" cy="179.6" r="1.9"/><circle cx="533.6" cy="204.6" r="1.4"/><circle cx="526.0" cy="190.5" r="2.9"/><circle cx="520.9" cy="179.9" r="2.3"/><circle cx="536.2" cy="218.6" r="1.6"/><circle cx="518.9" cy="175.7" r="1.9"/><circle cx="527.4" cy="194.6" r="2.0"/><circle cx="532.3" cy="198.3" r="2.5"/><circle cx="505.7" cy="131.4" r="1.6"/><circle cx="536.9" cy="178.6" r="2.9"/><circle cx="509.1" cy="188.8" r="1.3"/><circle cx="547.8" cy="203.0" r="2.8"/><circle cx="524.3" cy="175.7" r="2.7"/><circle cx="489.1" cy="129.8" r="2.0"/><circle cx="533.8" cy="199.6" r="2.7"/><circle cx="510.4" cy="172.8" r="2.5"/><circle cx="510.1" cy="164.8" r="2.1"/><circle cx="531.3" cy="183.8" r="1.8"/><circle cx="513.7" cy="155.1" r="2.0"/></g><g fill="#4c4448" opacity="0.8"><circle cx="387.5" cy="388.2" r="4.0"/><circle cx="383.3" cy="384.2" r="2.7"/><circle cx="395.4" cy="400.1" r="2.8"/><circle cx="383.6" cy="403.4" r="4.0"/><circle cx="390.4" cy="389.3" r="2.9"/><circle cx="386.5" cy="386.4" r="3.3"/><circle cx="391.8" cy="402.5" r="2.4"/><circle cx="388.4" cy="395.6" r="3.7"/><circle cx="384.8" cy="372.4" r="2.9"/></g></g><rect x="389.5" y="446.5" width="26" height="50" fill="#7d7278"/><path d="M94.5,347.5 L228.5,345.5 L200.5,419.5 L242.5,425.5 L242.5,423.5 L94.5,455.5 Z" fill="#8b7f84"/><path d="M168.5,347.5 L228.5,345.5 L208.5,395.5 L178.5,385.5 Z" fill="#7f7378"/><path d="M94.5,385.5 Q148.5,375.5 198.5,405.5" stroke="#bcadb0" stroke-width="2.5" fill="none"/><path d="M158.5,350.5 Q168.5,370.5 153.5,385.5" stroke="#bcadb0" stroke-width="2.5" fill="none"/><path d="M94.5,455.5 L242.5,423.5 L242.5,457.5 L94.5,511.5 Z" fill="#b9a7aa"/><path d="M94.5,457.5 L242.5,425.5" stroke="#cdbfc0" stroke-width="2.5"/><path d="M94.5,665.5 L266.5,600.5 L248.5,685.5 L94.5,697.5 Z" fill="#a5969a"/><path d="M273.5,565.5 L373.5,560.5 L373.5,775.5 L228.5,775.5 L248.5,705.5 L268.5,635.5 Z" fill="#c5b3b2"/><g filter="url(#bl2)"><g fill="#4d4548" opacity="0.8"><circle cx="219.5" cy="743.9" r="2.4"/><circle cx="222.7" cy="745.1" r="2.0"/><circle cx="225.6" cy="719.1" r="2.7"/><circle cx="236.6" cy="699.6" r="2.5"/><circle cx="225.8" cy="708.9" r="2.4"/><circle cx="226.0" cy="730.2" r="3.1"/><circle cx="216.7" cy="760.7" r="2.8"/><circle cx="231.6" cy="682.5" r="3.2"/><circle cx="228.7" cy="713.5" r="3.4"/><circle cx="226.5" cy="689.0" r="3.0"/><circle cx="222.5" cy="711.3" r="2.6"/><circle cx="202.2" cy="758.7" r="1.9"/><circle cx="223.2" cy="713.4" r="1.8"/><circle cx="222.5" cy="703.3" r="1.9"/><circle cx="206.2" cy="752.6" r="1.9"/><circle cx="209.7" cy="735.5" r="2.7"/><circle cx="221.6" cy="760.0" r="3.0"/><circle cx="235.9" cy="702.3" r="1.8"/><circle cx="205.1" cy="748.7" r="3.2"/><circle cx="231.4" cy="705.8" r="2.7"/><circle cx="213.0" cy="726.0" r="3.5"/><circle cx="208.9" cy="755.1" r="1.6"/><circle cx="225.6" cy="739.7" r="2.1"/><circle cx="213.4" cy="709.5" r="2.0"/><circle cx="221.5" cy="711.6" r="3.4"/><circle cx="215.1" cy="707.6" r="1.9"/><circle cx="216.2" cy="701.3" r="1.5"/><circle cx="224.8" cy="683.6" r="2.9"/><circle cx="219.1" cy="750.8" r="2.6"/><circle cx="238.8" cy="706.1" r="2.1"/></g><g fill="#4d4548" opacity="0.8"><circle cx="215.5" cy="677.3" r="2.2"/><circle cx="219.2" cy="678.3" r="2.2"/><circle cx="178.2" cy="691.2" r="2.7"/><circle cx="215.5" cy="687.5" r="3.0"/><circle cx="182.9" cy="696.5" r="2.7"/><circle cx="216.1" cy="679.5" r="2.8"/><circle cx="188.1" cy="694.9" r="1.8"/><circle cx="210.9" cy="686.6" r="3.1"/><circle cx="153.4" cy="696.6" r="1.7"/><circle cx="211.7" cy="688.6" r="2.4"/><circle cx="231.2" cy="671.4" r="2.1"/><circle cx="197.9" cy="693.2" r="1.5"/><circle cx="216.0" cy="683.4" r="2.0"/><circle cx="196.5" cy="696.8" r="2.5"/><circle cx="199.6" cy="689.4" r="2.7"/><circle cx="207.0" cy="677.0" r="3.4"/><circle cx="183.1" cy="697.0" r="2.2"/><circle cx="218.5" cy="683.4" r="3.5"/><circle cx="216.0" cy="684.7" r="2.3"/><circle cx="176.8" cy="693.0" r="3.4"/><circle cx="172.3" cy="699.5" r="1.6"/><circle cx="230.9" cy="662.7" r="1.7"/><circle cx="199.6" cy="691.0" r="1.6"/><circle cx="216.3" cy="675.9" r="3.0"/><circle cx="193.8" cy="689.8" r="2.0"/></g><g fill="#5a5055" opacity="0.8"><circle cx="276.8" cy="634.9" r="2.0"/><circle cx="265.5" cy="594.0" r="1.7"/><circle cx="274.1" cy="592.4" r="2.1"/><circle cx="272.1" cy="588.4" r="2.6"/><circle cx="280.7" cy="598.7" r="2.1"/><circle cx="274.1" cy="580.2" r="2.7"/><circle cx="270.7" cy="588.0" r="1.7"/><circle cx="268.2" cy="641.0" r="2.2"/><circle cx="268.2" cy="601.5" r="2.7"/><circle cx="277.4" cy="577.1" r="1.3"/><circle cx="270.6" cy="591.3" r="2.9"/><circle cx="275.9" cy="654.8" r="1.7"/><circle cx="273.9" cy="606.7" r="2.4"/><circle cx="274.6" cy="658.6" r="1.8"/><circle cx="272.7" cy="641.3" r="1.7"/><circle cx="266.8" cy="598.7" r="1.2"/><circle cx="270.4" cy="652.6" r="2.0"/><circle cx="282.0" cy="651.1" r="1.7"/></g></g><rect x="236.5" y="645.5" width="8" height="14" fill="#e3dde0"/><polygon points="379.0,342.5 229.5,344.3 200.7,419.8 216.7,416.5 242.5,426.2 242.5,505.0 260.1,509.8 284.2,498.5 369.5,429.5 374.2,419.8 354.9,400.5 351.7,368.4 380.7,352.3" fill="#8c9a8a" stroke="#21b04c" stroke-width="3.2" stroke-linejoin="round"/><polygon points="371.0,429.5 390.3,432.5 406.4,455.1 403.2,471.2 380.7,500.1 372.6,516.2 371.0,558.0 361.4,561.2 277.8,572.5 271.4,561.2 274.6,513.0" fill="#aab19f" stroke="#21b04c" stroke-width="3.2" stroke-linejoin="round"/><polygon points="93.0,622.3 268.2,556.4 264.9,599.8 93.0,663.0" fill="#8c9a8a" stroke="#21b04c" stroke-width="3.2" stroke-linejoin="round"/><polygon points="94.5,701.0 101.0,698.5 133.1,710.5 181.4,693.0 192.6,685.0 191.0,699.5 210.3,705.9 226.4,750.9 224.8,770.2 94.5,770.2" fill="#8c9a8a" stroke="#21b04c" stroke-width="3.2" stroke-linejoin="round"/><polygon points="232.8,347.5 306.7,353.9 308.3,429.5 256.9,448.7 244.0,418.2 215.1,403.7" fill="#a9935d" stroke="#f08a1c" stroke-width="3.2" stroke-linejoin="round"/><polygon points="93.0,511.5 239.2,458.4 240.8,513.0 173.5,529.5 139.5,551.5 93.0,569.5" fill="#a9935d" stroke="#f08a1c" stroke-width="3.2" stroke-linejoin="round"/><polygon points="93.0,575.5 139.5,556.5 173.3,535.5 268.2,514.5 273.0,519.5 268.2,556.4 94.5,620.5" fill="#a9935d" stroke="#f08a1c" stroke-width="3.2" stroke-linejoin="round"/><path d="M94.5,571.5 L139.5,554.0 L173.5,532.5 L268.5,516.5" stroke="#d9c7b0" stroke-width="1.5" fill="none"/><path d="M288.5,555.5 L388.5,445.5" stroke="#c2c6b8" stroke-width="4" opacity="0.6" filter="url(#bl2)"/><polyline points="79.5,705.5 84.5,325.5 376.5,325.5" fill="none" stroke="#4a8ef2" stroke-width="3"/><polygon points="378.5,66.5 543.5,66.5 543.5,327.5 414.5,327.5 414.5,500.5 375.5,500.5 375.5,776.5 80.0,776.5 89.5,341.5 378.5,341.5" fill="none" stroke="#7b4ff3" stroke-width="3.6" stroke-linejoin="miter"/><circle cx="158.9" cy="382.8" r="9.2" fill="#fff" stroke="#4a8ef2" stroke-width="3.6"/><circle cx="359.8" cy="402.1" r="9.2" fill="#fff" stroke="#4a8ef2" stroke-width="3.6"/><circle cx="242.5" cy="506.5" r="9.2" fill="#fff" stroke="#4a8ef2" stroke-width="3.6"/><circle cx="379.0" cy="501.8" r="9.2" fill="#fff" stroke="#4a8ef2" stroke-width="3.6"/><g filter="url(#bl2)"><g fill="#4f5434" opacity="0.8"><circle cx="11.2" cy="697.9" r="2.5"/><circle cx="27.1" cy="658.3" r="2.8"/><circle cx="4.8" cy="661.6" r="1.8"/><circle cx="35.2" cy="668.9" r="1.5"/><circle cx="26.9" cy="683.6" r="1.6"/><circle cx="8.9" cy="689.4" r="3.0"/><circle cx="8.9" cy="675.9" r="3.1"/><circle cx="22.2" cy="676.8" r="1.9"/><circle cx="19.4" cy="680.3" r="2.4"/><circle cx="23.4" cy="678.7" r="2.8"/><circle cx="15.3" cy="692.6" r="2.6"/><circle cx="30.3" cy="689.1" r="2.9"/><circle cx="20.4" cy="662.9" r="1.7"/><circle cx="24.3" cy="662.9" r="2.7"/><circle cx="20.3" cy="680.9" r="2.4"/><circle cx="9.1" cy="665.7" r="2.9"/><circle cx="32.4" cy="666.4" r="2.1"/><circle cx="16.6" cy="672.0" r="2.8"/><circle cx="27.7" cy="688.9" r="3.1"/><circle cx="16.7" cy="672.8" r="2.8"/><circle cx="11.8" cy="692.0" r="2.3"/><circle cx="20.5" cy="676.5" r="2.2"/><circle cx="17.6" cy="698.1" r="1.8"/></g><g fill="#4f5434" opacity="0.8"><circle cx="24.0" cy="382.9" r="2.5"/></g></g><rect x="1.5" y="685.5" width="12" height="10" fill="#eee8da"/><rect x="18.5" y="715.5" width="20" height="8" fill="#8c8a60"/><rect x="0" y="778.5" width="539" height="6" fill="#d8c8a4"/><g filter="url(#bl2)"><g fill="#55553a" opacity="0.8"><circle cx="53.6" cy="785.1" r="1.9"/><circle cx="144.9" cy="785.1" r="1.5"/><circle cx="128.9" cy="788.7" r="1.4"/><circle cx="123.5" cy="786.3" r="2.0"/><circle cx="75.3" cy="786.9" r="1.9"/><circle cx="82.4" cy="786.0" r="2.2"/><circle cx="110.9" cy="787.5" r="1.8"/><circle cx="136.9" cy="786.4" r="1.9"/><circle cx="38.5" cy="786.8" r="1.6"/><circle cx="23.2" cy="787.3" r="1.2"/><circle cx="114.1" cy="788.4" r="1.9"/><circle cx="46.1" cy="785.7" r="2.2"/><circle cx="29.2" cy="787.1" r="1.3"/><circle cx="23.1" cy="787.5" r="1.6"/><circle cx="39.3" cy="788.3" r="1.5"/><circle cx="42.9" cy="789.5" r="1.4"/><circle cx="113.5" cy="783.7" r="2.3"/><circle cx="26.0" cy="786.6" r="1.9"/><circle cx="100.9" cy="786.6" r="1.3"/><circle cx="1.0" cy="786.0" r="1.3"/><circle cx="35.7" cy="785.5" r="2.3"/><circle cx="35.2" cy="786.0" r="1.6"/><circle cx="35.9" cy="786.0" r="2.3"/><circle cx="128.8" cy="784.6" r="2.2"/><circle cx="97.4" cy="785.5" r="1.5"/><circle cx="45.4" cy="786.7" r="1.8"/><circle cx="108.1" cy="785.7" r="1.8"/><circle cx="23.2" cy="787.2" r="2.0"/><circle cx="61.7" cy="787.0" r="1.7"/><circle cx="100.6" cy="786.0" r="2.1"/><circle cx="154.9" cy="783.8" r="1.9"/><circle cx="94.2" cy="786.6" r="2.0"/><circle cx="158.1" cy="786.5" r="1.9"/><circle cx="75.1" cy="789.0" r="1.8"/><circle cx="51.9" cy="786.8" r="2.0"/></g><g fill="#55553a" opacity="0.8"><circle cx="535.3" cy="785.2" r="2.3"/><circle cx="488.5" cy="784.5" r="1.3"/><circle cx="471.2" cy="784.0" r="1.8"/><circle cx="482.7" cy="786.9" r="2.1"/><circle cx="538.1" cy="786.0" r="1.6"/><circle cx="464.2" cy="784.9" r="2.0"/><circle cx="448.8" cy="785.6" r="2.2"/><circle cx="426.1" cy="783.6" r="1.9"/><circle cx="456.1" cy="787.5" r="1.6"/><circle cx="482.4" cy="787.0" r="2.2"/><circle cx="477.6" cy="788.4" r="1.4"/><circle cx="438.3" cy="787.5" r="1.4"/><circle cx="527.9" cy="786.9" r="2.1"/><circle cx="530.3" cy="787.1" r="1.9"/><circle cx="533.2" cy="787.1" r="2.0"/></g></g><defs><clipPath id="vclip"><polygon points="165.9,789.5 371.3,792.1 368.7,989.8 219.2,988.5 219.2,942.9 206.5,902.5 165.9,874.5"/></clipPath></defs><polygon points="165.9,789.5 371.3,792.1 368.7,989.8 219.2,988.5 219.2,942.9 206.5,902.5 165.9,874.5" fill="#8d8d5e"/><g stroke="#75774a" stroke-width="1.3" opacity="0.5" clip-path="url(#vclip)"><line x1="168.5" y1="789.5" x2="168.5" y2="989.5"/><line x1="172.5" y1="789.5" x2="172.5" y2="989.5"/><line x1="176.5" y1="789.5" x2="176.5" y2="989.5"/><line x1="180.5" y1="789.5" x2="180.5" y2="989.5"/><line x1="184.5" y1="789.5" x2="184.5" y2="989.5"/><line x1="188.5" y1="789.5" x2="188.5" y2="989.5"/><line x1="192.5" y1="789.5" x2="192.5" y2="989.5"/><line x1="196.5" y1="789.5" x2="196.5" y2="989.5"/><line x1="200.5" y1="789.5" x2="200.5" y2="989.5"/><line x1="204.5" y1="789.5" x2="204.5" y2="989.5"/><line x1="208.5" y1="789.5" x2="208.5" y2="989.5"/><line x1="212.5" y1="789.5" x2="212.5" y2="989.5"/><line x1="216.5" y1="789.5" x2="216.5" y2="989.5"/><line x1="220.5" y1="789.5" x2="220.5" y2="989.5"/><line x1="224.5" y1="789.5" x2="224.5" y2="989.5"/><line x1="228.5" y1="789.5" x2="228.5" y2="989.5"/><line x1="232.5" y1="789.5" x2="232.5" y2="989.5"/><line x1="236.5" y1="789.5" x2="236.5" y2="989.5"/><line x1="240.5" y1="789.5" x2="240.5" y2="989.5"/><line x1="244.5" y1="789.5" x2="244.5" y2="989.5"/><line x1="248.5" y1="789.5" x2="248.5" y2="989.5"/><line x1="252.5" y1="789.5" x2="252.5" y2="989.5"/><line x1="256.5" y1="789.5" x2="256.5" y2="989.5"/><line x1="260.5" y1="789.5" x2="260.5" y2="989.5"/><line x1="264.5" y1="789.5" x2="264.5" y2="989.5"/><line x1="268.5" y1="789.5" x2="268.5" y2="989.5"/><line x1="272.5" y1="789.5" x2="272.5" y2="989.5"/><line x1="276.5" y1="789.5" x2="276.5" y2="989.5"/><line x1="280.5" y1="789.5" x2="280.5" y2="989.5"/><line x1="284.5" y1="789.5" x2="284.5" y2="989.5"/><line x1="288.5" y1="789.5" x2="288.5" y2="989.5"/><line x1="292.5" y1="789.5" x2="292.5" y2="989.5"/><line x1="296.5" y1="789.5" x2="296.5" y2="989.5"/><line x1="300.5" y1="789.5" x2="300.5" y2="989.5"/><line x1="304.5" y1="789.5" x2="304.5" y2="989.5"/><line x1="308.5" y1="789.5" x2="308.5" y2="989.5"/><line x1="312.5" y1="789.5" x2="312.5" y2="989.5"/><line x1="316.5" y1="789.5" x2="316.5" y2="989.5"/><line x1="320.5" y1="789.5" x2="320.5" y2="989.5"/><line x1="324.5" y1="789.5" x2="324.5" y2="989.5"/><line x1="328.5" y1="789.5" x2="328.5" y2="989.5"/><line x1="332.5" y1="789.5" x2="332.5" y2="989.5"/><line x1="336.5" y1="789.5" x2="336.5" y2="989.5"/><line x1="340.5" y1="789.5" x2="340.5" y2="989.5"/><line x1="344.5" y1="789.5" x2="344.5" y2="989.5"/><line x1="348.5" y1="789.5" x2="348.5" y2="989.5"/><line x1="352.5" y1="789.5" x2="352.5" y2="989.5"/><line x1="356.5" y1="789.5" x2="356.5" y2="989.5"/><line x1="360.5" y1="789.5" x2="360.5" y2="989.5"/><line x1="364.5" y1="789.5" x2="364.5" y2="989.5"/><line x1="368.5" y1="789.5" x2="368.5" y2="989.5"/></g><g clip-path="url(#vclip)" filter="url(#bl4)"><circle cx="248.5" cy="835.5" r="30" fill="#7d7f50" opacity="0.6"/><circle cx="328.5" cy="955.5" r="30" fill="#a09e70" opacity="0.5"/></g><path d="M233.5,793.5 L240.5,810.5 Q276.5,860.5 298.5,885.5 Q318.5,910.5 328.5,900.5" fill="none" stroke="#d8cba8" stroke-width="3"/><ellipse cx="312.5" cy="899.5" rx="16" ry="13" fill="#5d5e42" opacity="0.85" filter="url(#bl2)"/><rect x="0" y="1021.5" width="52" height="60" fill="#8f905f"/><polygon points="51.5,1002.5 124.5,999.5 180.5,1075.5 51.5,1075.5" fill="#d2c09a"/><rect x="18.5" y="869.5" width="55" height="6" fill="#efe8d8" opacity="0.75"/><rect x="30.5" y="855.5" width="42" height="5" fill="#e6ddc8" opacity="0.7"/><rect x="500.5" y="789.5" width="45" height="58" fill="#d3c4a2"/><g filter="url(#bl3)" fill="none" stroke="#6b6e46" stroke-linecap="round" stroke-linejoin="round" opacity="0.55"><path d="M1.2,930.3 L26.5,907.5 L59.5,889.5 L97.5,887.2 L130.5,897.3 L160.9,917.5 L181.1,958.2 L201.5,988.5 L229.3,1031.5 L247.1,1075.5" stroke-width="15"/><path d="M1.2,993.5 L39.2,986.0 L77.2,973.5 L102.5,958.2" stroke-width="13"/><path d="M95.0,993.5 L140.5,1019.0 L165.9,1057.0 L178.5,1075.5" stroke-width="13"/><path d="M140.5,1013.5 L191.3,1031.5 L254.5,1019.0 L305.5,1031.5 L356.1,1031.5 L394.1,1019.0" stroke-width="18"/><path d="M538.5,922.5 L482.5,942.9 L432.1,958.2 L399.1,993.5 L383.9,1031.5 L368.5,1075.5" stroke-width="18"/><path d="M538.5,993.5 L470.1,1019.0 L444.8,1057.0 L428.5,1075.5" stroke-width="18"/><path d="M120.3,780.5 L125.5,841.5 L130.5,887.2" stroke-width="9"/><path d="M428.5,865.5 L468.5,855.5 L508.5,875.5" stroke-width="13"/></g><g filter="url(#bl2)"><g fill="#4a5232" opacity="0.85"><circle cx="4.0" cy="923.3" r="3.7"/><circle cx="89.6" cy="891.1" r="3.5"/><circle cx="44.6" cy="898.6" r="3.4"/><circle cx="107.7" cy="875.9" r="2.6"/><circle cx="97.2" cy="892.7" r="4.0"/><circle cx="16.4" cy="917.0" r="2.7"/><circle cx="73.7" cy="874.6" r="4.0"/><circle cx="45.5" cy="888.1" r="3.8"/><circle cx="223.2" cy="1009.0" r="2.8"/><circle cx="178.0" cy="939.4" r="3.9"/><circle cx="174.2" cy="956.4" r="4.0"/><circle cx="241.2" cy="1072.2" r="4.2"/><circle cx="239.3" cy="1014.7" r="4.0"/><circle cx="146.3" cy="910.6" r="3.6"/><circle cx="94.6" cy="889.9" r="2.8"/><circle cx="151.3" cy="899.4" r="2.5"/><circle cx="191.5" cy="961.4" r="3.2"/><circle cx="239.4" cy="1075.5" r="1.8"/><circle cx="72.5" cy="895.7" r="2.6"/><circle cx="130.1" cy="903.9" r="4.2"/><circle cx="245.0" cy="1055.7" r="4.0"/><circle cx="151.1" cy="917.6" r="3.2"/><circle cx="105.5" cy="882.1" r="4.1"/><circle cx="237.4" cy="1065.7" r="2.4"/><circle cx="2.8" cy="929.0" r="3.1"/><circle cx="192.3" cy="996.2" r="2.8"/><circle cx="41.7" cy="904.1" r="4.1"/><circle cx="155.5" cy="914.7" r="3.5"/><circle cx="238.0" cy="1016.9" r="3.0"/><circle cx="38.1" cy="904.1" r="2.2"/><circle cx="219.1" cy="1016.3" r="1.8"/><circle cx="187.5" cy="960.8" r="2.6"/><circle cx="43.1" cy="914.9" r="2.2"/><circle cx="108.4" cy="894.3" r="3.4"/><circle cx="149.7" cy="919.5" r="1.8"/><circle cx="155.7" cy="915.9" r="2.6"/><circle cx="57.4" cy="889.2" r="2.0"/><circle cx="234.8" cy="1058.2" r="3.6"/><circle cx="208.1" cy="983.8" r="2.8"/><circle cx="76.5" cy="888.1" r="3.3"/><circle cx="183.3" cy="966.3" r="2.8"/><circle cx="82.5" cy="885.7" r="3.2"/><circle cx="100.9" cy="896.0" r="3.0"/><circle cx="97.3" cy="874.6" r="2.2"/><circle cx="143.5" cy="907.9" r="2.3"/><circle cx="105.4" cy="891.7" r="2.3"/><circle cx="216.5" cy="979.8" r="2.0"/><circle cx="247.3" cy="1059.2" r="2.5"/><circle cx="158.1" cy="906.0" r="1.6"/><circle cx="209.5" cy="994.4" r="2.1"/><circle cx="211.5" cy="991.6" r="2.5"/><circle cx="76.2" cy="895.2" r="1.9"/><circle cx="-5.2" cy="924.8" r="3.2"/><circle cx="46.4" cy="883.7" r="3.4"/><circle cx="231.7" cy="1058.0" r="2.2"/><circle cx="9.7" cy="929.1" r="3.3"/><circle cx="14.8" cy="934.3" r="2.9"/><circle cx="217.5" cy="1000.5" r="2.5"/><circle cx="233.0" cy="1052.3" r="2.9"/><circle cx="228.2" cy="1028.1" r="2.3"/><circle cx="226.6" cy="1023.1" r="2.2"/><circle cx="99.8" cy="884.4" r="3.1"/><circle cx="74.3" cy="880.1" r="4.0"/><circle cx="32.2" cy="907.6" r="1.7"/><circle cx="204.4" cy="1015.4" r="3.7"/><circle cx="222.9" cy="1027.4" r="4.1"/><circle cx="145.1" cy="901.7" r="3.4"/><circle cx="174.8" cy="935.1" r="2.8"/><circle cx="82.0" cy="886.8" r="2.5"/><circle cx="251.0" cy="1066.7" r="3.0"/><circle cx="170.9" cy="919.1" r="2.9"/><circle cx="82.1" cy="888.2" r="2.2"/><circle cx="155.0" cy="912.1" r="3.1"/><circle cx="59.6" cy="893.4" r="4.0"/><circle cx="84.4" cy="888.3" r="3.7"/><circle cx="77.6" cy="884.0" r="3.6"/><circle cx="100.7" cy="893.0" r="1.8"/><circle cx="259.8" cy="1074.9" r="3.3"/><circle cx="203.1" cy="989.1" r="3.0"/><circle cx="-2.7" cy="907.3" r="4.2"/><circle cx="180.7" cy="961.5" r="2.3"/><circle cx="203.2" cy="1015.6" r="2.6"/><circle cx="171.9" cy="950.3" r="1.7"/><circle cx="-5.6" cy="932.3" r="2.7"/><circle cx="108.4" cy="889.3" r="2.7"/><circle cx="127.9" cy="900.5" r="2.4"/><circle cx="157.6" cy="924.4" r="2.2"/><circle cx="151.4" cy="907.0" r="4.0"/><circle cx="6.9" cy="932.9" r="2.9"/><circle cx="92.0" cy="886.6" r="1.7"/><circle cx="161.7" cy="930.4" r="3.2"/><circle cx="24.8" cy="916.3" r="2.1"/><circle cx="158.6" cy="923.9" r="2.2"/><circle cx="86.1" cy="881.3" r="4.1"/><circle cx="112.1" cy="894.4" r="2.3"/><circle cx="99.6" cy="882.4" r="4.2"/><circle cx="32.4" cy="923.9" r="3.7"/><circle cx="166.9" cy="913.1" r="2.4"/><circle cx="251.2" cy="1061.5" r="3.4"/><circle cx="13.8" cy="917.8" r="2.5"/><circle cx="178.0" cy="937.6" r="3.5"/><circle cx="195.3" cy="983.3" r="2.3"/><circle cx="142.8" cy="925.2" r="3.2"/><circle cx="225.2" cy="1044.1" r="2.7"/><circle cx="139.3" cy="908.9" r="2.3"/><circle cx="69.1" cy="886.3" r="2.9"/><circle cx="155.5" cy="943.2" r="3.1"/><circle cx="165.0" cy="936.3" r="3.8"/><circle cx="86.6" cy="889.3" r="3.9"/><circle cx="148.4" cy="918.2" r="3.7"/><circle cx="24.2" cy="908.0" r="3.6"/><circle cx="177.1" cy="940.1" r="2.7"/><circle cx="147.1" cy="901.5" r="3.1"/><circle cx="136.9" cy="894.1" r="3.5"/><circle cx="61.2" cy="898.9" r="4.0"/><circle cx="73.8" cy="891.5" r="3.0"/><circle cx="171.3" cy="933.7" r="4.0"/><circle cx="199.2" cy="981.7" r="2.9"/><circle cx="233.0" cy="1051.6" r="3.4"/><circle cx="221.1" cy="1028.4" r="2.7"/><circle cx="149.7" cy="903.4" r="1.7"/><circle cx="174.9" cy="956.2" r="3.0"/><circle cx="99.0" cy="886.8" r="2.8"/><circle cx="26.2" cy="919.4" r="3.8"/><circle cx="240.7" cy="1062.0" r="1.8"/><circle cx="210.9" cy="1014.1" r="3.8"/><circle cx="155.2" cy="913.3" r="3.1"/><circle cx="171.9" cy="945.7" r="2.5"/><circle cx="123.4" cy="890.8" r="2.3"/><circle cx="-0.9" cy="927.8" r="2.0"/><circle cx="213.2" cy="1002.1" r="2.0"/><circle cx="125.5" cy="915.9" r="1.6"/><circle cx="144.7" cy="916.6" r="3.0"/><circle cx="37.5" cy="893.9" r="2.3"/><circle cx="162.1" cy="910.8" r="2.9"/><circle cx="247.6" cy="1052.6" r="2.1"/><circle cx="184.0" cy="964.4" r="3.0"/><circle cx="20.2" cy="911.9" r="3.5"/><circle cx="36.9" cy="905.2" r="4.1"/><circle cx="85.7" cy="888.4" r="3.5"/><circle cx="235.1" cy="1012.9" r="3.8"/><circle cx="156.7" cy="918.5" r="1.7"/><circle cx="-2.6" cy="913.5" r="3.1"/><circle cx="0.2" cy="915.9" r="2.4"/><circle cx="227.7" cy="1023.7" r="3.4"/><circle cx="15.0" cy="921.8" r="1.9"/><circle cx="35.4" cy="906.4" r="3.3"/><circle cx="28.6" cy="913.3" r="2.6"/><circle cx="207.3" cy="982.0" r="3.5"/><circle cx="258.3" cy="1069.9" r="2.5"/><circle cx="24.9" cy="903.6" r="2.1"/><circle cx="170.0" cy="932.7" r="3.2"/><circle cx="85.7" cy="886.9" r="3.3"/><circle cx="1.6" cy="919.1" r="4.0"/><circle cx="224.4" cy="1001.1" r="1.9"/><circle cx="27.6" cy="913.5" r="3.4"/><circle cx="3.3" cy="919.1" r="1.8"/><circle cx="215.8" cy="1007.9" r="2.0"/><circle cx="101.9" cy="892.9" r="2.8"/><circle cx="47.1" cy="889.2" r="2.2"/><circle cx="160.0" cy="938.4" r="1.8"/><circle cx="194.3" cy="986.3" r="2.4"/><circle cx="244.2" cy="1054.9" r="2.7"/><circle cx="14.7" cy="922.0" r="3.9"/><circle cx="213.1" cy="1027.0" r="2.9"/><circle cx="253.0" cy="1059.8" r="3.8"/><circle cx="106.5" cy="880.6" r="2.1"/><circle cx="144.9" cy="911.7" r="2.3"/><circle cx="162.6" cy="903.2" r="2.9"/><circle cx="69.0" cy="890.6" r="1.7"/><circle cx="211.1" cy="1008.3" r="2.5"/><circle cx="253.3" cy="1056.9" r="2.9"/><circle cx="156.3" cy="911.7" r="2.3"/><circle cx="78.3" cy="870.4" r="3.5"/><circle cx="179.7" cy="945.6" r="2.1"/><circle cx="189.7" cy="970.7" r="3.0"/><circle cx="254.4" cy="1075.4" r="2.4"/><circle cx="70.2" cy="879.0" r="2.7"/><circle cx="165.1" cy="932.7" r="3.3"/><circle cx="99.1" cy="895.9" r="1.7"/><circle cx="187.8" cy="976.3" r="2.0"/><circle cx="208.9" cy="1006.8" r="4.2"/><circle cx="229.1" cy="1042.5" r="3.6"/><circle cx="94.2" cy="881.5" r="3.0"/><circle cx="140.4" cy="898.0" r="3.2"/><circle cx="150.7" cy="916.1" r="3.5"/><circle cx="24.0" cy="905.4" r="3.3"/><circle cx="81.6" cy="884.5" r="2.8"/><circle cx="166.7" cy="934.2" r="2.6"/><circle cx="197.9" cy="982.4" r="3.2"/><circle cx="37.8" cy="916.4" r="2.2"/><circle cx="79.8" cy="890.1" r="1.8"/><circle cx="238.2" cy="1042.0" r="2.8"/><circle cx="199.2" cy="972.6" r="3.3"/><circle cx="44.6" cy="899.7" r="1.8"/><circle cx="155.4" cy="907.4" r="2.1"/><circle cx="161.6" cy="922.8" r="2.5"/><circle cx="88.2" cy="882.7" r="1.7"/><circle cx="132.9" cy="897.0" r="3.0"/><circle cx="170.5" cy="918.3" r="3.6"/><circle cx="109.8" cy="895.3" r="2.5"/><circle cx="66.5" cy="887.5" r="2.4"/><circle cx="232.1" cy="1028.3" r="1.9"/><circle cx="83.0" cy="889.2" r="4.1"/><circle cx="46.4" cy="887.0" r="2.1"/><circle cx="186.3" cy="927.2" r="1.8"/><circle cx="90.9" cy="885.6" r="3.8"/><circle cx="63.0" cy="891.5" r="3.1"/><circle cx="217.0" cy="1007.9" r="2.6"/><circle cx="111.3" cy="896.1" r="3.6"/><circle cx="179.8" cy="951.5" r="2.5"/><circle cx="229.0" cy="1021.6" r="3.6"/><circle cx="23.8" cy="917.9" r="4.0"/><circle cx="181.5" cy="979.6" r="3.3"/><circle cx="129.6" cy="906.6" r="4.0"/><circle cx="147.7" cy="887.7" r="2.3"/><circle cx="142.7" cy="889.2" r="3.1"/><circle cx="212.1" cy="1010.5" r="4.2"/><circle cx="139.3" cy="902.9" r="2.6"/><circle cx="41.3" cy="898.3" r="2.2"/><circle cx="229.6" cy="1037.3" r="3.3"/><circle cx="216.4" cy="1016.0" r="3.1"/><circle cx="15.5" cy="927.4" r="4.2"/><circle cx="60.6" cy="875.4" r="1.8"/><circle cx="23.9" cy="910.9" r="2.3"/><circle cx="187.1" cy="957.8" r="3.5"/><circle cx="217.3" cy="1037.3" r="2.9"/><circle cx="46.3" cy="900.8" r="1.8"/><circle cx="253.9" cy="1074.0" r="1.9"/><circle cx="173.2" cy="932.4" r="3.9"/><circle cx="240.2" cy="1077.4" r="1.7"/><circle cx="242.1" cy="1066.5" r="3.9"/><circle cx="152.8" cy="923.2" r="3.7"/><circle cx="188.1" cy="957.6" r="2.3"/><circle cx="242.4" cy="1066.8" r="2.8"/><circle cx="243.6" cy="1038.4" r="3.4"/><circle cx="155.7" cy="904.8" r="1.9"/><circle cx="230.9" cy="1044.4" r="2.3"/><circle cx="50.8" cy="891.6" r="3.8"/><circle cx="221.2" cy="1059.7" r="3.1"/><circle cx="242.4" cy="1051.4" r="3.6"/><circle cx="34.5" cy="903.4" r="3.5"/><circle cx="59.1" cy="904.2" r="2.6"/><circle cx="79.0" cy="876.7" r="2.7"/><circle cx="235.2" cy="1035.1" r="2.9"/><circle cx="200.8" cy="979.0" r="1.8"/><circle cx="31.6" cy="905.4" r="3.3"/><circle cx="84.7" cy="891.7" r="3.5"/><circle cx="56.8" cy="888.2" r="3.9"/><circle cx="173.1" cy="943.8" r="4.1"/><circle cx="199.2" cy="994.0" r="1.9"/><circle cx="35.9" cy="899.8" r="4.1"/><circle cx="75.5" cy="896.0" r="2.8"/><circle cx="107.9" cy="880.8" r="3.5"/><circle cx="193.1" cy="962.5" r="2.9"/><circle cx="141.9" cy="920.3" r="3.2"/><circle cx="175.4" cy="961.8" r="3.9"/><circle cx="11.5" cy="914.9" r="1.7"/><circle cx="160.8" cy="923.3" r="1.6"/><circle cx="82.1" cy="886.9" r="1.9"/></g><g fill="#4a5232" opacity="0.85"><circle cx="64.5" cy="982.4" r="2.3"/><circle cx="69.6" cy="973.7" r="2.3"/><circle cx="91.5" cy="959.7" r="2.5"/><circle cx="84.1" cy="966.7" r="2.9"/><circle cx="93.7" cy="955.9" r="3.5"/><circle cx="35.3" cy="992.3" r="3.4"/><circle cx="84.5" cy="962.7" r="2.9"/><circle cx="-5.1" cy="997.7" r="4.0"/><circle cx="44.8" cy="988.2" r="2.5"/><circle cx="53.3" cy="974.6" r="3.4"/><circle cx="70.1" cy="976.0" r="4.0"/><circle cx="30.4" cy="986.5" r="2.0"/><circle cx="44.2" cy="981.7" r="3.3"/><circle cx="26.5" cy="995.6" r="3.4"/><circle cx="28.5" cy="991.3" r="3.8"/><circle cx="59.0" cy="982.9" r="2.6"/><circle cx="13.8" cy="995.5" r="3.9"/><circle cx="105.0" cy="972.7" r="2.0"/><circle cx="88.4" cy="954.5" r="3.3"/><circle cx="38.7" cy="994.9" r="2.7"/><circle cx="35.3" cy="985.5" r="3.7"/><circle cx="76.8" cy="977.9" r="2.6"/><circle cx="72.7" cy="971.8" r="2.2"/><circle cx="78.6" cy="976.1" r="2.8"/><circle cx="79.4" cy="970.0" r="2.3"/><circle cx="4.1" cy="988.5" r="2.9"/><circle cx="88.2" cy="975.1" r="3.5"/><circle cx="100.4" cy="968.1" r="2.6"/><circle cx="77.6" cy="967.9" r="3.0"/><circle cx="32.6" cy="994.8" r="3.9"/><circle cx="106.8" cy="961.1" r="2.4"/><circle cx="38.4" cy="989.0" r="2.7"/><circle cx="15.6" cy="994.7" r="2.6"/><circle cx="51.8" cy="985.6" r="2.1"/><circle cx="83.2" cy="977.6" r="3.6"/><circle cx="12.5" cy="988.2" r="2.6"/><circle cx="32.2" cy="987.0" r="2.0"/><circle cx="39.5" cy="989.4" r="2.1"/><circle cx="49.9" cy="984.3" r="2.2"/><circle cx="60.0" cy="980.3" r="1.8"/><circle cx="2.0" cy="1001.6" r="2.1"/><circle cx="42.4" cy="982.9" r="2.1"/><circle cx="91.1" cy="952.3" r="3.8"/><circle cx="45.9" cy="977.0" r="2.9"/><circle cx="77.8" cy="966.3" r="3.3"/><circle cx="93.3" cy="951.3" r="2.1"/><circle cx="20.7" cy="994.9" r="3.9"/><circle cx="42.4" cy="997.7" r="2.1"/><circle cx="58.3" cy="983.6" r="2.5"/><circle cx="68.8" cy="985.7" r="2.0"/><circle cx="18.6" cy="989.7" r="4.0"/><circle cx="63.9" cy="983.8" r="4.1"/><circle cx="51.4" cy="974.7" r="2.7"/><circle cx="64.9" cy="981.3" r="2.0"/><circle cx="101.6" cy="952.0" r="3.9"/><circle cx="57.1" cy="977.8" r="2.0"/><circle cx="86.9" cy="981.4" r="3.8"/><circle cx="46.5" cy="979.3" r="1.7"/><circle cx="44.6" cy="984.5" r="2.1"/><circle cx="104.6" cy="963.4" r="4.2"/><circle cx="16.4" cy="998.0" r="4.0"/><circle cx="65.6" cy="978.3" r="3.8"/><circle cx="59.3" cy="977.8" r="1.9"/><circle cx="20.6" cy="1001.9" r="3.7"/><circle cx="7.0" cy="992.3" r="3.4"/><circle cx="69.3" cy="978.4" r="4.0"/><circle cx="19.0" cy="990.4" r="3.7"/><circle cx="101.8" cy="968.1" r="3.2"/><circle cx="39.4" cy="977.1" r="2.8"/><circle cx="96.4" cy="950.8" r="2.3"/><circle cx="70.4" cy="979.0" r="1.9"/><circle cx="37.7" cy="982.4" r="3.8"/><circle cx="67.1" cy="980.3" r="4.2"/><circle cx="88.4" cy="963.4" r="2.1"/><circle cx="48.9" cy="981.6" r="3.0"/><circle cx="45.9" cy="983.9" r="1.8"/><circle cx="109.8" cy="949.4" r="4.1"/><circle cx="25.5" cy="992.9" r="4.2"/><circle cx="99.3" cy="962.0" r="2.3"/><circle cx="25.4" cy="993.8" r="1.7"/><circle cx="37.8" cy="991.1" r="1.8"/><circle cx="75.0" cy="974.7" r="1.7"/><circle cx="96.8" cy="961.1" r="3.5"/><circle cx="16.2" cy="995.3" r="2.4"/><circle cx="11.6" cy="992.7" r="2.7"/><circle cx="2.8" cy="990.3" r="2.3"/><circle cx="35.9" cy="985.5" r="3.8"/><circle cx="-0.8" cy="1004.4" r="2.8"/><circle cx="3.3" cy="986.0" r="2.6"/><circle cx="76.4" cy="972.5" r="1.7"/></g><g fill="#4a5232" opacity="0.85"><circle cx="137.3" cy="1011.3" r="3.7"/><circle cx="187.1" cy="1071.9" r="2.4"/><circle cx="150.0" cy="1032.1" r="3.3"/><circle cx="166.1" cy="1087.6" r="2.8"/><circle cx="135.5" cy="1008.3" r="3.5"/><circle cx="155.6" cy="1046.4" r="3.5"/><circle cx="171.1" cy="1067.4" r="4.2"/><circle cx="97.9" cy="997.6" r="3.7"/><circle cx="130.3" cy="1014.6" r="1.7"/><circle cx="110.2" cy="997.4" r="3.7"/><circle cx="172.5" cy="1064.7" r="2.9"/><circle cx="114.3" cy="1007.0" r="2.6"/><circle cx="177.0" cy="1064.3" r="2.5"/><circle cx="162.2" cy="1061.1" r="4.0"/><circle cx="177.1" cy="1066.7" r="3.6"/><circle cx="122.7" cy="1007.9" r="3.8"/><circle cx="164.9" cy="1062.0" r="3.3"/><circle cx="163.8" cy="1075.2" r="2.3"/><circle cx="102.0" cy="1009.0" r="3.6"/><circle cx="131.0" cy="1014.5" r="2.3"/><circle cx="156.0" cy="1038.1" r="2.6"/><circle cx="101.3" cy="1001.5" r="2.2"/><circle cx="136.0" cy="1023.1" r="3.7"/><circle cx="156.2" cy="1045.9" r="2.6"/><circle cx="132.5" cy="1014.2" r="3.1"/><circle cx="164.3" cy="1033.8" r="2.0"/><circle cx="158.6" cy="1057.5" r="2.0"/><circle cx="118.4" cy="1007.8" r="3.5"/><circle cx="159.1" cy="1047.4" r="1.8"/><circle cx="127.3" cy="1017.7" r="1.6"/><circle cx="140.0" cy="1027.4" r="2.8"/><circle cx="168.9" cy="1078.6" r="4.2"/><circle cx="101.3" cy="1001.2" r="1.9"/><circle cx="126.8" cy="1013.8" r="2.7"/><circle cx="176.0" cy="1075.8" r="2.9"/><circle cx="143.3" cy="1042.3" r="2.8"/><circle cx="175.0" cy="1058.3" r="3.5"/><circle cx="147.3" cy="1028.9" r="3.9"/><circle cx="178.3" cy="1067.5" r="1.9"/><circle cx="156.1" cy="1038.3" r="4.0"/><circle cx="150.9" cy="1023.8" r="1.9"/><circle cx="101.6" cy="985.9" r="4.0"/><circle cx="115.4" cy="1011.1" r="1.8"/><circle cx="117.4" cy="1016.5" r="4.0"/><circle cx="146.7" cy="1022.1" r="3.4"/><circle cx="167.4" cy="1068.3" r="3.3"/><circle cx="171.9" cy="1066.2" r="4.0"/><circle cx="149.3" cy="1028.1" r="3.7"/><circle cx="123.3" cy="1001.7" r="1.7"/><circle cx="103.9" cy="1004.5" r="2.3"/><circle cx="145.5" cy="1037.8" r="2.6"/><circle cx="155.4" cy="1056.9" r="3.8"/><circle cx="163.9" cy="1031.8" r="3.9"/><circle cx="139.2" cy="1011.4" r="3.2"/><circle cx="123.9" cy="1014.0" r="2.9"/><circle cx="168.5" cy="1065.9" r="2.0"/><circle cx="105.3" cy="998.0" r="2.7"/><circle cx="168.0" cy="1047.1" r="2.2"/><circle cx="152.1" cy="1015.4" r="1.9"/><circle cx="107.3" cy="1010.6" r="2.9"/><circle cx="170.6" cy="1049.4" r="2.3"/><circle cx="167.2" cy="1057.7" r="1.9"/><circle cx="154.5" cy="1040.1" r="2.5"/><circle cx="152.9" cy="1048.8" r="3.5"/><circle cx="175.6" cy="1062.5" r="2.5"/><circle cx="167.1" cy="1061.2" r="3.1"/><circle cx="164.4" cy="1072.6" r="2.8"/><circle cx="172.4" cy="1053.0" r="4.0"/><circle cx="155.0" cy="1031.6" r="2.1"/><circle cx="131.9" cy="1029.6" r="3.1"/><circle cx="187.3" cy="1058.5" r="2.2"/><circle cx="135.6" cy="1022.7" r="2.1"/><circle cx="156.7" cy="1038.1" r="4.1"/><circle cx="167.8" cy="1063.9" r="3.7"/><circle cx="169.0" cy="1052.6" r="3.1"/><circle cx="185.7" cy="1068.6" r="1.7"/><circle cx="142.7" cy="1021.2" r="2.5"/><circle cx="174.1" cy="1061.2" r="3.7"/><circle cx="94.7" cy="990.1" r="2.8"/><circle cx="185.8" cy="1079.0" r="3.5"/><circle cx="172.8" cy="1068.7" r="2.8"/><circle cx="148.2" cy="1025.2" r="2.8"/><circle cx="105.4" cy="1003.7" r="3.8"/><circle cx="174.8" cy="1070.3" r="1.9"/><circle cx="101.4" cy="1010.8" r="2.7"/><circle cx="119.0" cy="1000.7" r="2.9"/><circle cx="141.8" cy="1033.3" r="4.0"/><circle cx="145.6" cy="1013.5" r="2.2"/><circle cx="124.7" cy="996.3" r="1.6"/><circle cx="157.5" cy="1061.0" r="3.9"/></g><g fill="#4a5232" opacity="0.85"><circle cx="149.7" cy="1008.3" r="1.8"/><circle cx="322.0" cy="1023.5" r="1.8"/><circle cx="288.3" cy="1032.5" r="3.3"/><circle cx="303.6" cy="1031.1" r="3.1"/><circle cx="239.0" cy="1008.5" r="3.6"/><circle cx="221.5" cy="1030.5" r="3.8"/><circle cx="323.5" cy="1012.6" r="3.0"/><circle cx="302.5" cy="1029.4" r="1.9"/><circle cx="303.1" cy="1030.5" r="3.0"/><circle cx="253.7" cy="1010.4" r="2.3"/><circle cx="279.2" cy="1030.0" r="2.2"/><circle cx="392.9" cy="1028.1" r="2.2"/><circle cx="198.9" cy="1044.5" r="1.8"/><circle cx="317.0" cy="1028.0" r="2.2"/><circle cx="199.7" cy="1031.5" r="2.6"/><circle cx="279.3" cy="1023.8" r="3.5"/><circle cx="300.1" cy="1023.6" r="3.4"/><circle cx="379.4" cy="1014.7" r="3.7"/><circle cx="158.8" cy="1026.7" r="2.7"/><circle cx="341.7" cy="1017.4" r="3.6"/><circle cx="329.9" cy="1013.8" r="2.2"/><circle cx="163.8" cy="1021.8" r="2.3"/><circle cx="250.5" cy="1008.1" r="3.8"/><circle cx="292.8" cy="1023.2" r="1.9"/><circle cx="376.5" cy="1012.3" r="3.2"/><circle cx="149.2" cy="1015.2" r="3.4"/><circle cx="399.5" cy="1005.2" r="2.0"/><circle cx="187.7" cy="1045.1" r="3.7"/><circle cx="190.2" cy="1032.4" r="3.7"/><circle cx="234.2" cy="1022.8" r="4.2"/><circle cx="266.7" cy="999.3" r="3.2"/><circle cx="270.3" cy="1026.8" r="1.9"/><circle cx="251.5" cy="1016.1" r="4.0"/><circle cx="285.4" cy="1025.1" r="3.3"/><circle cx="367.4" cy="1023.1" r="4.1"/><circle cx="135.8" cy="1010.4" r="3.1"/><circle cx="384.8" cy="1027.7" r="3.3"/><circle cx="373.5" cy="1036.2" r="4.2"/><circle cx="349.9" cy="1030.5" r="2.0"/><circle cx="359.3" cy="1010.3" r="3.4"/><circle cx="164.8" cy="1020.3" r="2.2"/><circle cx="359.4" cy="1018.1" r="2.4"/><circle cx="365.9" cy="1025.1" r="2.8"/><circle cx="357.1" cy="1033.1" r="2.1"/><circle cx="188.5" cy="1034.0" r="2.9"/><circle cx="219.9" cy="1030.1" r="4.1"/><circle cx="294.7" cy="1033.9" r="3.5"/><circle cx="296.0" cy="1023.2" r="2.9"/><circle cx="326.0" cy="1035.8" r="1.9"/><circle cx="256.5" cy="1015.5" r="2.9"/><circle cx="247.7" cy="1014.2" r="2.5"/><circle cx="359.7" cy="1037.8" r="3.2"/><circle cx="338.1" cy="1017.2" r="3.6"/><circle cx="337.1" cy="1026.7" r="3.3"/><circle cx="167.7" cy="1016.5" r="2.9"/><circle cx="157.8" cy="1018.4" r="2.8"/><circle cx="353.0" cy="1026.9" r="4.2"/><circle cx="156.4" cy="1009.2" r="1.7"/><circle cx="401.1" cy="1017.7" r="4.2"/><circle cx="164.3" cy="1026.1" r="3.8"/><circle cx="203.9" cy="1029.6" r="2.4"/><circle cx="275.5" cy="1043.5" r="2.3"/><circle cx="205.6" cy="1030.4" r="3.7"/><circle cx="208.9" cy="1012.2" r="2.4"/><circle cx="161.5" cy="1020.4" r="3.9"/><circle cx="155.5" cy="1013.9" r="2.9"/><circle cx="299.6" cy="1026.1" r="3.3"/><circle cx="317.0" cy="1040.7" r="2.8"/><circle cx="365.6" cy="1019.5" r="2.2"/><circle cx="291.8" cy="1019.6" r="3.2"/><circle cx="299.7" cy="1035.3" r="1.7"/><circle cx="375.7" cy="1014.7" r="3.6"/><circle cx="273.3" cy="1021.2" r="2.1"/><circle cx="327.4" cy="1030.2" r="2.1"/><circle cx="367.8" cy="1040.9" r="4.1"/><circle cx="384.7" cy="1032.2" r="2.3"/><circle cx="180.3" cy="1039.0" r="2.2"/><circle cx="182.0" cy="1027.1" r="4.2"/><circle cx="288.0" cy="1032.7" r="2.3"/><circle cx="406.8" cy="1014.4" r="3.8"/><circle cx="206.6" cy="1029.4" r="2.7"/><circle cx="364.2" cy="1024.0" r="2.1"/><circle cx="270.9" cy="1009.0" r="3.6"/><circle cx="160.0" cy="1017.1" r="3.8"/><circle cx="147.9" cy="1018.5" r="3.3"/><circle cx="196.4" cy="1014.4" r="3.2"/><circle cx="301.2" cy="1037.8" r="1.7"/><circle cx="340.3" cy="1038.8" r="2.5"/><circle cx="217.2" cy="1035.6" r="4.2"/><circle cx="378.3" cy="1021.5" r="2.0"/><circle cx="350.6" cy="1024.9" r="3.5"/><circle cx="229.8" cy="1027.1" r="3.7"/><circle cx="312.8" cy="1026.6" r="2.5"/><circle cx="291.4" cy="1023.3" r="3.6"/><circle cx="401.2" cy="1028.6" r="2.2"/><circle cx="244.5" cy="1014.2" r="2.3"/><circle cx="291.7" cy="1024.6" r="3.0"/><circle cx="259.3" cy="1005.7" r="3.7"/><circle cx="379.5" cy="1016.8" r="3.9"/><circle cx="347.5" cy="1038.6" r="3.2"/><circle cx="184.9" cy="1037.8" r="3.0"/><circle cx="335.5" cy="1031.5" r="2.2"/><circle cx="357.5" cy="1025.4" r="4.0"/><circle cx="124.3" cy="1003.0" r="2.4"/><circle cx="276.2" cy="1009.8" r="3.3"/><circle cx="178.5" cy="1018.4" r="3.0"/><circle cx="300.8" cy="1030.1" r="2.6"/><circle cx="143.5" cy="1013.3" r="2.8"/><circle cx="207.6" cy="1016.8" r="3.0"/><circle cx="360.5" cy="1042.8" r="1.9"/><circle cx="375.0" cy="1039.7" r="2.6"/><circle cx="281.8" cy="1039.8" r="2.6"/><circle cx="215.9" cy="1024.2" r="2.0"/><circle cx="373.4" cy="1038.1" r="2.4"/><circle cx="324.9" cy="1034.3" r="3.9"/><circle cx="252.1" cy="1023.1" r="1.8"/><circle cx="330.3" cy="1025.5" r="2.7"/><circle cx="201.9" cy="1035.4" r="2.3"/><circle cx="402.6" cy="1010.7" r="2.3"/><circle cx="327.9" cy="1034.7" r="3.0"/><circle cx="159.4" cy="1035.4" r="2.0"/><circle cx="376.4" cy="1033.9" r="3.9"/><circle cx="150.6" cy="1007.1" r="3.7"/><circle cx="259.3" cy="1032.3" r="3.3"/><circle cx="328.4" cy="1030.7" r="3.3"/><circle cx="385.4" cy="1031.5" r="1.8"/><circle cx="302.7" cy="1033.8" r="2.6"/><circle cx="348.1" cy="1028.9" r="3.5"/><circle cx="185.3" cy="1026.4" r="4.1"/><circle cx="371.0" cy="1032.9" r="2.4"/><circle cx="218.4" cy="1025.8" r="2.1"/><circle cx="337.0" cy="1027.6" r="3.6"/><circle cx="328.1" cy="1050.3" r="3.6"/><circle cx="337.4" cy="1033.6" r="3.9"/><circle cx="291.3" cy="1019.7" r="2.3"/><circle cx="261.6" cy="1002.6" r="3.3"/><circle cx="289.1" cy="1017.6" r="2.0"/><circle cx="247.4" cy="1020.5" r="2.2"/><circle cx="364.7" cy="1032.8" r="2.6"/><circle cx="166.7" cy="1027.2" r="2.3"/><circle cx="234.9" cy="1020.5" r="4.2"/><circle cx="189.4" cy="1022.7" r="2.7"/><circle cx="398.0" cy="1022.2" r="2.1"/><circle cx="291.4" cy="1025.9" r="1.6"/><circle cx="259.1" cy="1018.7" r="1.9"/><circle cx="192.3" cy="1021.8" r="3.5"/><circle cx="255.7" cy="1027.4" r="2.0"/><circle cx="148.0" cy="1020.6" r="2.5"/><circle cx="269.3" cy="1029.0" r="3.8"/><circle cx="310.7" cy="1021.8" r="3.2"/><circle cx="384.2" cy="1042.9" r="2.9"/><circle cx="301.1" cy="1038.7" r="2.1"/><circle cx="329.9" cy="1029.4" r="2.3"/><circle cx="291.0" cy="1035.3" r="3.1"/><circle cx="348.8" cy="1026.5" r="2.5"/><circle cx="323.0" cy="1038.4" r="2.1"/><circle cx="250.4" cy="1029.5" r="3.1"/><circle cx="259.6" cy="1021.2" r="3.6"/><circle cx="262.8" cy="1023.0" r="2.4"/><circle cx="154.0" cy="1022.6" r="3.0"/><circle cx="167.1" cy="1030.5" r="2.3"/><circle cx="173.6" cy="1037.5" r="2.5"/><circle cx="167.7" cy="1036.0" r="3.3"/><circle cx="372.9" cy="1040.5" r="2.4"/><circle cx="388.5" cy="1022.4" r="2.8"/><circle cx="218.8" cy="1021.5" r="2.4"/><circle cx="265.1" cy="1022.5" r="4.2"/><circle cx="134.8" cy="1021.4" r="3.2"/><circle cx="296.0" cy="1019.3" r="3.6"/><circle cx="310.8" cy="1013.8" r="2.0"/></g><g fill="#4a5232" opacity="0.85"><circle cx="377.1" cy="1037.7" r="2.0"/><circle cx="382.5" cy="1053.0" r="3.9"/><circle cx="388.5" cy="999.3" r="3.5"/><circle cx="480.5" cy="944.0" r="2.1"/><circle cx="396.6" cy="1057.6" r="3.3"/><circle cx="459.1" cy="942.3" r="3.1"/><circle cx="382.4" cy="1067.9" r="3.0"/><circle cx="370.7" cy="1074.7" r="3.1"/><circle cx="392.5" cy="996.9" r="2.4"/><circle cx="383.4" cy="1073.6" r="3.4"/><circle cx="419.4" cy="974.1" r="2.1"/><circle cx="445.0" cy="948.0" r="2.1"/><circle cx="478.4" cy="951.1" r="2.5"/><circle cx="462.7" cy="952.3" r="3.6"/><circle cx="515.0" cy="921.8" r="1.9"/><circle cx="383.3" cy="1027.2" r="2.1"/><circle cx="476.6" cy="934.5" r="3.4"/><circle cx="454.6" cy="953.1" r="3.3"/><circle cx="398.7" cy="1006.2" r="3.4"/><circle cx="412.6" cy="976.3" r="2.7"/><circle cx="409.0" cy="977.1" r="1.9"/><circle cx="442.3" cy="941.2" r="2.2"/><circle cx="485.3" cy="922.0" r="2.6"/><circle cx="365.9" cy="1059.0" r="2.5"/><circle cx="465.0" cy="961.7" r="1.7"/><circle cx="383.9" cy="1023.7" r="4.1"/><circle cx="367.2" cy="1069.7" r="3.9"/><circle cx="408.3" cy="1004.0" r="2.9"/><circle cx="428.7" cy="974.8" r="2.2"/><circle cx="404.3" cy="980.4" r="1.8"/><circle cx="437.4" cy="956.2" r="3.7"/><circle cx="371.3" cy="1051.2" r="2.1"/><circle cx="431.1" cy="956.6" r="3.2"/><circle cx="541.7" cy="925.9" r="3.2"/><circle cx="382.0" cy="1036.5" r="4.0"/><circle cx="475.4" cy="945.1" r="3.1"/><circle cx="376.3" cy="1058.0" r="2.0"/><circle cx="368.7" cy="1074.3" r="4.1"/><circle cx="382.5" cy="1006.7" r="2.8"/><circle cx="386.5" cy="1055.5" r="2.3"/><circle cx="399.8" cy="998.6" r="2.9"/><circle cx="426.4" cy="958.3" r="3.7"/><circle cx="373.5" cy="1029.8" r="3.0"/><circle cx="486.7" cy="930.9" r="4.0"/><circle cx="364.5" cy="1082.5" r="2.7"/><circle cx="406.8" cy="957.1" r="3.4"/><circle cx="421.9" cy="961.5" r="4.0"/><circle cx="477.8" cy="929.1" r="2.5"/><circle cx="522.6" cy="925.8" r="2.0"/><circle cx="411.6" cy="1003.6" r="2.4"/><circle cx="368.5" cy="1044.1" r="2.1"/><circle cx="507.3" cy="921.3" r="2.7"/><circle cx="419.8" cy="981.4" r="2.7"/><circle cx="364.8" cy="1052.6" r="3.6"/><circle cx="370.5" cy="1044.7" r="2.3"/><circle cx="518.4" cy="932.7" r="3.1"/><circle cx="388.2" cy="1028.9" r="2.4"/><circle cx="375.5" cy="1055.4" r="3.6"/><circle cx="508.3" cy="925.2" r="1.7"/><circle cx="374.2" cy="1029.5" r="3.7"/><circle cx="438.9" cy="952.8" r="3.2"/><circle cx="381.5" cy="1078.7" r="3.1"/><circle cx="383.8" cy="1026.8" r="3.2"/><circle cx="503.7" cy="930.3" r="2.1"/><circle cx="389.3" cy="1030.9" r="2.3"/><circle cx="385.9" cy="1027.7" r="1.6"/><circle cx="377.4" cy="1023.6" r="2.0"/><circle cx="423.3" cy="959.7" r="4.2"/><circle cx="377.8" cy="1027.5" r="3.1"/><circle cx="388.1" cy="1054.0" r="1.8"/><circle cx="398.3" cy="1018.5" r="2.7"/><circle cx="376.7" cy="1058.2" r="3.5"/><circle cx="381.9" cy="1041.2" r="1.9"/><circle cx="392.7" cy="1005.3" r="4.1"/><circle cx="513.1" cy="943.4" r="3.5"/><circle cx="383.1" cy="1032.9" r="1.9"/><circle cx="377.9" cy="1026.1" r="2.3"/><circle cx="424.9" cy="990.3" r="3.9"/><circle cx="433.6" cy="960.5" r="2.7"/><circle cx="420.0" cy="990.6" r="3.7"/><circle cx="391.1" cy="993.5" r="2.4"/><circle cx="393.9" cy="1000.0" r="2.0"/><circle cx="467.6" cy="947.9" r="3.8"/><circle cx="468.4" cy="949.6" r="2.2"/><circle cx="403.1" cy="958.7" r="2.7"/><circle cx="516.7" cy="926.0" r="1.8"/><circle cx="498.3" cy="932.5" r="2.0"/><circle cx="403.3" cy="991.5" r="3.2"/><circle cx="385.2" cy="1037.5" r="3.7"/><circle cx="363.7" cy="1052.3" r="2.9"/><circle cx="527.1" cy="928.8" r="4.2"/><circle cx="384.1" cy="1032.0" r="4.0"/><circle cx="505.1" cy="932.6" r="1.6"/><circle cx="370.4" cy="1019.1" r="3.2"/><circle cx="440.0" cy="959.3" r="3.4"/><circle cx="523.9" cy="916.6" r="2.2"/><circle cx="367.2" cy="1052.6" r="2.9"/><circle cx="511.8" cy="930.5" r="3.0"/><circle cx="502.7" cy="926.1" r="3.7"/><circle cx="400.7" cy="982.7" r="2.8"/><circle cx="535.8" cy="920.9" r="1.8"/><circle cx="427.4" cy="978.8" r="2.7"/><circle cx="443.6" cy="959.6" r="1.8"/><circle cx="388.3" cy="1034.9" r="3.6"/><circle cx="383.8" cy="1051.5" r="3.6"/><circle cx="385.8" cy="1037.9" r="3.6"/><circle cx="374.9" cy="1050.8" r="3.3"/><circle cx="395.0" cy="988.1" r="2.7"/><circle cx="365.4" cy="1075.2" r="2.0"/><circle cx="380.2" cy="1008.1" r="1.9"/><circle cx="438.0" cy="957.6" r="2.9"/><circle cx="440.0" cy="968.8" r="3.1"/><circle cx="470.2" cy="957.4" r="3.1"/><circle cx="396.2" cy="989.1" r="3.6"/><circle cx="372.9" cy="1030.6" r="3.9"/><circle cx="458.1" cy="955.4" r="1.6"/><circle cx="448.4" cy="966.5" r="1.7"/><circle cx="454.6" cy="954.8" r="3.1"/><circle cx="369.6" cy="1055.1" r="2.0"/><circle cx="415.7" cy="967.5" r="2.2"/><circle cx="408.4" cy="960.9" r="2.3"/><circle cx="432.0" cy="955.7" r="3.6"/><circle cx="368.1" cy="1058.4" r="3.8"/><circle cx="430.7" cy="970.0" r="2.6"/><circle cx="520.2" cy="935.0" r="3.7"/><circle cx="520.2" cy="933.4" r="2.9"/><circle cx="392.7" cy="1017.5" r="2.0"/><circle cx="378.9" cy="1036.3" r="4.1"/><circle cx="416.9" cy="988.8" r="1.7"/><circle cx="473.2" cy="935.7" r="3.7"/><circle cx="379.0" cy="1029.4" r="3.3"/><circle cx="394.0" cy="996.2" r="3.9"/><circle cx="408.3" cy="989.7" r="2.1"/><circle cx="532.6" cy="923.6" r="1.8"/><circle cx="466.0" cy="951.4" r="3.1"/><circle cx="479.3" cy="946.1" r="2.9"/><circle cx="466.9" cy="956.9" r="2.0"/><circle cx="412.4" cy="978.1" r="2.4"/><circle cx="456.6" cy="950.4" r="2.1"/><circle cx="457.1" cy="952.8" r="3.4"/><circle cx="389.0" cy="1028.7" r="3.5"/><circle cx="401.2" cy="1017.0" r="2.1"/><circle cx="491.9" cy="956.2" r="2.4"/><circle cx="393.5" cy="1042.5" r="2.6"/><circle cx="507.9" cy="912.7" r="2.2"/><circle cx="455.8" cy="948.3" r="3.5"/><circle cx="375.6" cy="1063.3" r="1.7"/><circle cx="375.4" cy="1027.9" r="2.7"/><circle cx="390.1" cy="1042.0" r="3.8"/><circle cx="466.4" cy="961.9" r="2.5"/><circle cx="438.1" cy="969.8" r="3.4"/><circle cx="456.8" cy="942.8" r="3.2"/><circle cx="542.9" cy="910.7" r="2.2"/><circle cx="488.3" cy="933.1" r="3.7"/><circle cx="448.2" cy="944.5" r="2.8"/><circle cx="383.8" cy="1026.7" r="2.7"/><circle cx="509.1" cy="925.8" r="4.1"/><circle cx="440.4" cy="957.9" r="1.7"/><circle cx="407.0" cy="976.4" r="1.9"/><circle cx="383.1" cy="1045.1" r="3.5"/><circle cx="371.5" cy="1073.9" r="3.0"/><circle cx="407.8" cy="981.4" r="3.2"/><circle cx="397.7" cy="1008.1" r="4.1"/><circle cx="405.0" cy="1004.8" r="3.8"/><circle cx="473.4" cy="938.0" r="2.0"/><circle cx="477.1" cy="935.4" r="4.1"/><circle cx="471.3" cy="941.8" r="2.7"/><circle cx="388.3" cy="1011.5" r="1.7"/><circle cx="374.0" cy="1044.3" r="3.2"/><circle cx="370.0" cy="1075.9" r="2.0"/><circle cx="398.5" cy="1003.1" r="2.9"/><circle cx="500.4" cy="931.6" r="1.6"/><circle cx="361.1" cy="1063.7" r="2.7"/><circle cx="429.8" cy="960.1" r="4.1"/><circle cx="370.8" cy="1069.5" r="3.3"/><circle cx="393.0" cy="1016.1" r="3.1"/><circle cx="374.2" cy="1040.8" r="2.7"/><circle cx="373.3" cy="1075.8" r="3.1"/><circle cx="369.9" cy="1041.3" r="2.1"/><circle cx="376.4" cy="1041.2" r="4.0"/><circle cx="415.0" cy="977.2" r="1.9"/><circle cx="481.6" cy="934.7" r="3.8"/><circle cx="371.8" cy="1055.3" r="3.6"/><circle cx="521.3" cy="922.9" r="2.6"/><circle cx="420.7" cy="956.0" r="1.9"/><circle cx="457.9" cy="959.8" r="3.2"/><circle cx="471.0" cy="951.1" r="3.5"/><circle cx="415.1" cy="988.6" r="4.2"/><circle cx="485.5" cy="943.2" r="3.5"/><circle cx="393.9" cy="995.2" r="3.0"/><circle cx="390.1" cy="1044.0" r="3.1"/><circle cx="425.0" cy="988.8" r="3.7"/><circle cx="480.8" cy="948.2" r="3.9"/><circle cx="431.5" cy="967.1" r="3.6"/><circle cx="392.2" cy="1003.6" r="2.2"/><circle cx="376.7" cy="1067.3" r="4.0"/><circle cx="498.4" cy="925.3" r="3.1"/><circle cx="442.1" cy="950.4" r="2.5"/><circle cx="374.3" cy="1069.5" r="1.9"/><circle cx="379.9" cy="999.6" r="3.1"/></g><g fill="#4a5232" opacity="0.85"><circle cx="435.1" cy="1057.2" r="2.4"/><circle cx="444.7" cy="1074.3" r="3.5"/><circle cx="462.9" cy="1048.6" r="3.1"/><circle cx="485.3" cy="1010.9" r="3.8"/><circle cx="461.5" cy="1032.4" r="4.2"/><circle cx="533.5" cy="995.0" r="2.1"/><circle cx="449.6" cy="1057.8" r="3.6"/><circle cx="434.0" cy="1056.1" r="2.3"/><circle cx="449.4" cy="1049.4" r="3.1"/><circle cx="457.7" cy="1048.5" r="4.0"/><circle cx="465.0" cy="1032.3" r="2.5"/><circle cx="449.7" cy="1032.8" r="4.0"/><circle cx="491.0" cy="1025.0" r="2.8"/><circle cx="457.2" cy="1050.7" r="2.9"/><circle cx="546.8" cy="986.5" r="2.0"/><circle cx="474.5" cy="1016.7" r="3.5"/><circle cx="510.2" cy="996.7" r="3.7"/><circle cx="431.2" cy="1064.3" r="1.9"/><circle cx="433.0" cy="1087.7" r="3.8"/><circle cx="461.7" cy="1044.4" r="2.9"/><circle cx="497.1" cy="1026.4" r="3.5"/><circle cx="521.5" cy="993.0" r="1.9"/><circle cx="442.1" cy="1059.2" r="4.0"/><circle cx="540.9" cy="1006.6" r="2.2"/><circle cx="462.7" cy="1026.8" r="2.1"/><circle cx="447.2" cy="1055.3" r="1.8"/><circle cx="480.4" cy="1018.4" r="2.5"/><circle cx="473.9" cy="1020.9" r="4.1"/><circle cx="445.9" cy="1036.1" r="2.1"/><circle cx="518.9" cy="991.1" r="2.2"/><circle cx="500.0" cy="1008.5" r="3.4"/><circle cx="497.3" cy="1001.0" r="2.6"/><circle cx="442.7" cy="1037.2" r="3.0"/><circle cx="529.2" cy="979.6" r="2.4"/><circle cx="474.3" cy="1018.7" r="1.8"/><circle cx="461.4" cy="1026.4" r="2.3"/><circle cx="500.4" cy="1003.4" r="1.8"/><circle cx="450.6" cy="1062.3" r="3.8"/><circle cx="445.1" cy="1080.6" r="4.0"/><circle cx="475.2" cy="1014.7" r="3.0"/><circle cx="471.0" cy="1018.9" r="2.2"/><circle cx="448.5" cy="1074.6" r="2.4"/><circle cx="432.6" cy="1067.4" r="3.8"/><circle cx="529.3" cy="996.9" r="2.8"/><circle cx="448.4" cy="1024.0" r="2.6"/><circle cx="435.6" cy="1058.8" r="3.5"/><circle cx="449.3" cy="1051.7" r="1.7"/><circle cx="431.3" cy="1064.6" r="1.7"/><circle cx="439.5" cy="1065.3" r="2.4"/><circle cx="434.1" cy="1072.2" r="2.6"/><circle cx="422.5" cy="1063.0" r="2.8"/><circle cx="487.2" cy="1017.1" r="2.3"/><circle cx="442.2" cy="1069.7" r="2.8"/><circle cx="495.7" cy="1016.6" r="3.7"/><circle cx="548.0" cy="996.3" r="3.6"/><circle cx="470.3" cy="1031.7" r="2.3"/><circle cx="499.6" cy="1014.6" r="2.6"/><circle cx="455.5" cy="1036.8" r="3.3"/><circle cx="449.5" cy="1026.5" r="1.9"/><circle cx="464.5" cy="1029.4" r="2.6"/><circle cx="471.5" cy="1035.2" r="1.8"/><circle cx="448.0" cy="1021.7" r="1.8"/><circle cx="437.5" cy="1054.8" r="1.8"/><circle cx="464.1" cy="1017.5" r="3.9"/><circle cx="504.7" cy="1001.4" r="2.6"/><circle cx="467.7" cy="1014.5" r="2.5"/><circle cx="440.2" cy="1062.6" r="3.6"/><circle cx="437.9" cy="1058.5" r="4.2"/><circle cx="481.6" cy="1015.5" r="4.1"/><circle cx="436.5" cy="1050.2" r="3.6"/><circle cx="463.4" cy="1021.8" r="3.3"/><circle cx="491.4" cy="1010.3" r="4.2"/><circle cx="425.5" cy="1065.7" r="3.6"/><circle cx="441.0" cy="1042.6" r="2.6"/><circle cx="452.1" cy="1058.3" r="4.0"/><circle cx="457.6" cy="1036.1" r="3.4"/><circle cx="452.3" cy="1056.3" r="2.5"/><circle cx="499.5" cy="1004.6" r="3.7"/><circle cx="471.3" cy="1029.9" r="2.8"/><circle cx="439.3" cy="1063.5" r="2.2"/><circle cx="457.7" cy="1047.3" r="2.1"/><circle cx="534.1" cy="1005.0" r="1.9"/><circle cx="513.3" cy="984.1" r="1.7"/><circle cx="439.4" cy="1041.8" r="3.5"/><circle cx="526.3" cy="999.5" r="2.4"/><circle cx="427.3" cy="1066.8" r="2.7"/><circle cx="443.8" cy="1046.7" r="3.1"/><circle cx="440.5" cy="1065.3" r="2.8"/><circle cx="444.3" cy="1049.3" r="2.6"/><circle cx="499.1" cy="1002.3" r="2.3"/><circle cx="490.2" cy="1019.6" r="2.8"/><circle cx="454.1" cy="1053.7" r="2.0"/><circle cx="419.5" cy="1074.7" r="2.9"/><circle cx="476.5" cy="998.2" r="2.7"/><circle cx="432.8" cy="1076.3" r="2.2"/><circle cx="426.0" cy="1077.7" r="1.9"/><circle cx="452.7" cy="1038.9" r="2.7"/><circle cx="455.4" cy="1036.2" r="1.9"/><circle cx="459.0" cy="1057.7" r="1.6"/><circle cx="454.1" cy="1051.3" r="3.2"/><circle cx="434.4" cy="1077.1" r="2.3"/><circle cx="434.3" cy="1071.2" r="3.8"/><circle cx="492.6" cy="1020.2" r="1.7"/><circle cx="440.4" cy="1081.4" r="2.2"/><circle cx="444.8" cy="1053.0" r="2.7"/><circle cx="437.5" cy="1067.2" r="2.6"/><circle cx="462.3" cy="1035.0" r="2.6"/><circle cx="428.3" cy="1078.6" r="2.3"/><circle cx="487.3" cy="1004.7" r="2.0"/><circle cx="532.5" cy="997.6" r="2.1"/></g><g fill="#4a5232" opacity="0.85"><circle cx="134.0" cy="859.4" r="3.0"/><circle cx="126.4" cy="808.0" r="3.4"/><circle cx="126.5" cy="835.0" r="2.1"/><circle cx="130.2" cy="877.6" r="4.1"/><circle cx="120.9" cy="778.5" r="2.5"/><circle cx="117.5" cy="814.0" r="3.7"/><circle cx="117.9" cy="805.0" r="4.2"/><circle cx="120.9" cy="866.1" r="3.7"/><circle cx="128.3" cy="820.2" r="3.5"/><circle cx="124.4" cy="844.6" r="1.9"/><circle cx="117.9" cy="798.8" r="2.0"/><circle cx="123.0" cy="796.7" r="2.2"/><circle cx="124.7" cy="820.2" r="3.8"/><circle cx="117.8" cy="800.7" r="1.9"/><circle cx="124.7" cy="833.4" r="2.9"/><circle cx="125.1" cy="796.7" r="4.0"/><circle cx="125.3" cy="865.4" r="4.1"/><circle cx="124.6" cy="796.8" r="2.2"/><circle cx="126.8" cy="854.6" r="4.0"/><circle cx="126.2" cy="802.8" r="3.8"/><circle cx="117.6" cy="823.3" r="2.3"/><circle cx="130.6" cy="859.5" r="3.0"/><circle cx="124.0" cy="808.5" r="3.7"/><circle cx="118.7" cy="809.8" r="4.1"/><circle cx="129.6" cy="859.4" r="2.4"/><circle cx="124.1" cy="829.4" r="2.8"/><circle cx="120.1" cy="798.0" r="4.0"/><circle cx="117.2" cy="806.3" r="3.2"/><circle cx="126.6" cy="856.9" r="2.6"/><circle cx="130.2" cy="819.2" r="4.0"/><circle cx="123.6" cy="807.0" r="4.2"/><circle cx="116.9" cy="824.0" r="2.5"/><circle cx="122.8" cy="790.8" r="2.2"/><circle cx="128.2" cy="880.6" r="3.9"/><circle cx="119.4" cy="796.2" r="2.7"/><circle cx="120.6" cy="867.4" r="3.9"/><circle cx="125.6" cy="830.8" r="2.9"/><circle cx="122.4" cy="777.4" r="3.9"/><circle cx="120.7" cy="842.9" r="2.5"/><circle cx="128.1" cy="849.1" r="3.1"/><circle cx="129.0" cy="790.5" r="2.0"/><circle cx="123.4" cy="832.1" r="2.2"/><circle cx="127.3" cy="870.1" r="2.4"/><circle cx="127.8" cy="801.1" r="1.7"/><circle cx="127.4" cy="833.1" r="2.6"/><circle cx="121.9" cy="819.8" r="3.8"/><circle cx="125.3" cy="815.5" r="2.2"/><circle cx="126.4" cy="861.1" r="3.4"/><circle cx="124.4" cy="877.7" r="3.3"/><circle cx="122.0" cy="798.2" r="1.7"/><circle cx="117.1" cy="806.3" r="3.4"/><circle cx="131.2" cy="866.8" r="2.6"/><circle cx="121.0" cy="862.4" r="2.3"/><circle cx="123.4" cy="808.6" r="4.0"/><circle cx="126.1" cy="842.4" r="2.4"/><circle cx="126.9" cy="855.0" r="2.8"/><circle cx="133.0" cy="865.9" r="1.8"/><circle cx="135.9" cy="887.5" r="4.0"/><circle cx="122.5" cy="850.3" r="3.8"/><circle cx="127.8" cy="878.6" r="4.1"/></g><g fill="#4a5232" opacity="0.85"><circle cx="481.8" cy="862.8" r="2.0"/><circle cx="484.8" cy="873.7" r="3.9"/><circle cx="486.5" cy="861.4" r="3.6"/><circle cx="496.2" cy="881.7" r="3.2"/><circle cx="475.0" cy="859.9" r="2.6"/><circle cx="475.9" cy="858.6" r="1.9"/><circle cx="436.6" cy="862.9" r="2.1"/><circle cx="445.3" cy="866.1" r="2.2"/><circle cx="435.6" cy="864.7" r="1.8"/><circle cx="482.8" cy="860.1" r="3.2"/><circle cx="430.8" cy="866.3" r="2.0"/><circle cx="481.6" cy="864.0" r="4.1"/><circle cx="480.6" cy="862.9" r="1.9"/><circle cx="465.7" cy="874.9" r="2.5"/><circle cx="453.0" cy="865.8" r="2.4"/><circle cx="497.0" cy="890.1" r="1.7"/><circle cx="485.4" cy="872.0" r="3.2"/><circle cx="461.9" cy="856.4" r="2.8"/><circle cx="457.4" cy="862.2" r="4.1"/><circle cx="463.0" cy="845.3" r="1.7"/><circle cx="440.1" cy="865.8" r="2.2"/><circle cx="453.5" cy="859.3" r="2.0"/><circle cx="435.8" cy="862.9" r="3.0"/><circle cx="504.1" cy="862.8" r="4.1"/><circle cx="457.8" cy="861.7" r="2.3"/></g><g fill="#4a5232" opacity="0.8"><circle cx="418.9" cy="821.8" r="2.7"/><circle cx="417.0" cy="814.2" r="2.3"/><circle cx="411.7" cy="815.8" r="4.2"/><circle cx="419.7" cy="821.8" r="2.1"/><circle cx="425.0" cy="817.8" r="3.7"/></g></g></svg></div>
<div class="abs" style="left:119.5px;top:492px;width:64px;height:124px;box-sizing:border-box;border:2.5px solid rgba(60,50,30,0.35);border-radius:7px;background:#fff;background-clip:padding-box">
<div class="abs" style="left:0;top:57.5px;width:59px;height:1.5px;background:#c9c9c9"></div>
<div class="abs" style="left:17px;top:32.5px;width:25px;height:4.5px;background:#111"></div>
<div class="abs" style="left:27px;top:23px;width:4.5px;height:24px;background:#111"></div>
<div class="abs" style="left:17px;top:92.5px;width:25px;height:4.5px;background:#111"></div>
</div>
<svg class="abs" style="left:765px;top:415px" width="34" height="34" viewBox="0 0 34 34">
<path d="M1.8 15 Q1.8 12 4.5 10 L13.5 3 Q16.6 0.8 19.7 3 L28.8 10 Q31.5 12 31.5 15 V27 Q31.5 32 26.5 32 H6.8 Q1.8 32 1.8 27 Z" fill="#0f1a2e" stroke="#2a66e6" stroke-width="2.6" stroke-linejoin="round"/>
<path d="M16.6 23 V27.6" stroke="#2a66e6" stroke-width="2.6" stroke-linecap="round"/></svg>
<div class="t" id="c_farm" style="left:816.0px;top:415.6px;font-size:30.50px;font-weight:700;color:#7b8089;transform:scaleX(0.8581);">FARMING UNIT</div>
<div class="hr" style="left:763.5px;top:467.0px;width:527.5px"></div>
<svg class="abs" style="left:763.5px;top:524.5px" width="28" height="28" viewBox="0 0 28 28"><g fill="none" stroke="#8b9099" stroke-width="2.2" stroke-linecap="round" stroke-linejoin="round">
<circle cx="17.5" cy="10.5" r="8"/><circle cx="17.5" cy="10.5" r="2.4"/><path d="M11.5 16 L3 24.5 L3.5 26 L6.5 26.5 L7.5 24 L9.5 23.5 L10 21 L13 19"/></g></svg>
<div class="t" id="f_uid" style="left:804.0px;top:522.2px;font-size:30.50px;font-weight:400;color:#858a93;transform:scaleX(0.8518);">Unit ID</div>
<div class="t" id="f_uidv" style="left:1212.0px;top:522.2px;font-size:30.50px;font-weight:400;color:#f4f4f5;transform:scaleX(0.7838);">113125</div>
<div class="hr" style="left:763.5px;top:573.0px;width:527.5px"></div>
<svg class="abs" style="left:763.5px;top:598px" width="28" height="28" viewBox="0 0 28 28"><g fill="none" stroke="#8b9099" stroke-width="2.2" stroke-linejoin="round">
<path d="M11.5 2.5 H16.5 L17.5 6 L20.5 7.7 L24 6.8 L26.5 11 L24 13.6 V17 L26.5 19.5 L24 23.8 L20.5 22.8 L17.5 24.5 L16.5 28 H11.5 L10.5 24.5 L7.5 22.8 L4 23.8 L1.5 19.5 L4 17 V13.6 L1.5 11 L4 6.8 L7.5 7.7 L10.5 6 Z" transform="translate(0,-1.2) scale(1,0.96)"/>
<circle cx="14" cy="14" r="4"/></g></svg>
<div class="t" id="f_ovr" style="left:804.0px;top:596.7px;font-size:30.50px;font-weight:400;color:#858a93;transform:scaleX(0.8764);">Override</div>
<div class="t" id="f_ovrv" style="left:1168.5px;top:596.8px;font-size:25.00px;font-weight:400;color:#f0f0f2;transform:scaleX(0.8641);">open (#33)</div>
<div class="hr" style="left:763.5px;top:648.0px;width:527.5px"></div>
<svg class="abs" style="left:763.5px;top:672px" width="28" height="28" viewBox="0 0 28 28"><g stroke="#8b9099" stroke-width="2.3" stroke-linecap="round"><line x1="22.00" y1="14.00" x2="25.80" y2="14.00"/><line x1="20.93" y1="18.00" x2="24.22" y2="19.90"/><line x1="18.00" y1="20.93" x2="19.90" y2="24.22"/><line x1="14.00" y1="22.00" x2="14.00" y2="25.80"/><line x1="10.00" y1="20.93" x2="8.10" y2="24.22"/><line x1="7.07" y1="18.00" x2="3.78" y2="19.90"/><line x1="6.00" y1="14.00" x2="2.20" y2="14.00"/><line x1="7.07" y1="10.00" x2="3.78" y2="8.10"/><line x1="10.00" y1="7.07" x2="8.10" y2="3.78"/><line x1="14.00" y1="6.00" x2="14.00" y2="2.20"/><line x1="18.00" y1="7.07" x2="19.90" y2="3.78"/><line x1="20.93" y1="10.00" x2="24.22" y2="8.10"/></g></svg>
<div class="t" id="f_stat" style="left:804.0px;top:671.2px;font-size:30.50px;font-weight:400;color:#858a93;transform:scaleX(0.8766);">Status</div>
<div class="abs" style="left:1207.5px;top:670px;width:83px;height:33px;background:#111c30"></div>
<div class="t" id="f_draft" style="left:1224.5px;top:673.4px;font-size:25.50px;font-weight:700;color:#2f6ef2;transform:scaleX(0.8149);">Draft</div>
<div class="hr" style="left:763.5px;top:722.0px;width:527.5px"></div>
<svg class="abs" style="left:766px;top:828.5px" width="31" height="38" viewBox="0 0 31 38"><path d="M15 34.5 C8.5 28 1.9 21.8 1.9 14.6 a13.1 13.1 0 0 1 26.2 0 c0 7.2 -6.6 13.4 -13.1 19.9z" fill="#0f1a2e" stroke="#2563eb" stroke-width="2.8" stroke-linejoin="round"/><circle cx="15" cy="14.6" r="5" fill="none" stroke="#2563eb" stroke-width="2.8"/></svg>
<div class="t" id="c_wells" style="left:816.0px;top:830.2px;font-size:30.50px;font-weight:700;color:#7b8089;transform:scaleX(0.8301);">IRRIGATED WELLS</div>
<div class="hr" style="left:763.5px;top:882.0px;width:527.5px"></div>
<svg class="abs" style="left:784.5px;top:937.5px" width="31" height="38" viewBox="0 0 31 38"><path d="M15 34.5 C8.5 28 1.9 21.8 1.9 14.6 a13.1 13.1 0 0 1 26.2 0 c0 7.2 -6.6 13.4 -13.1 19.9z" fill="#2a2d31" stroke="#f2f2f2" stroke-width="2.6" stroke-linejoin="round"/><circle cx="15" cy="14.6" r="5" fill="none" stroke="#f2f2f2" stroke-width="2.6"/></svg>
<div class="t" id="w_n26" style="left:833.5px;top:939.5px;font-size:29.50px;font-weight:400;color:#4a5467;transform:scaleX(0.9278);">Well #26</div>
<div class="t" id="w_c26" style="left:1073.0px;top:943.0px;font-size:22.50px;font-weight:400;color:#9a9ea5;transform:scaleX(0.8515);">35.70046, -120.66138</div>
<svg class="abs" style="left:784.5px;top:1013.9px" width="31" height="38" viewBox="0 0 31 38"><path d="M15 34.5 C8.5 28 1.9 21.8 1.9 14.6 a13.1 13.1 0 0 1 26.2 0 c0 7.2 -6.6 13.4 -13.1 19.9z" fill="#2a2d31" stroke="#f2f2f2" stroke-width="2.6" stroke-linejoin="round"/><circle cx="15" cy="14.6" r="5" fill="none" stroke="#f2f2f2" stroke-width="2.6"/></svg>
<div class="t" id="w_n27" style="left:833.5px;top:1015.9px;font-size:29.50px;font-weight:400;color:#4a5467;transform:scaleX(0.9278);">Well #27</div>
<div class="t" id="w_c27" style="left:1078.0px;top:1019.4px;font-size:22.50px;font-weight:400;color:#9a9ea5;transform:scaleX(0.8288);">35.70227, -120.65891</div>
<svg class="abs" style="left:784.5px;top:1090.3px" width="31" height="38" viewBox="0 0 31 38"><path d="M15 34.5 C8.5 28 1.9 21.8 1.9 14.6 a13.1 13.1 0 0 1 26.2 0 c0 7.2 -6.6 13.4 -13.1 19.9z" fill="#2a2d31" stroke="#f2f2f2" stroke-width="2.6" stroke-linejoin="round"/><circle cx="15" cy="14.6" r="5" fill="none" stroke="#f2f2f2" stroke-width="2.6"/></svg>
<div class="t" id="w_n28" style="left:833.5px;top:1092.3px;font-size:29.50px;font-weight:400;color:#4a5467;transform:scaleX(0.9278);">Well #28</div>
<div class="t" id="w_c28" style="left:1073.0px;top:1095.8px;font-size:22.50px;font-weight:400;color:#9a9ea5;transform:scaleX(0.8515);">35.70051, -120.65846</div>
<svg class="abs" style="left:784.5px;top:1166.7px" width="31" height="38" viewBox="0 0 31 38"><path d="M15 34.5 C8.5 28 1.9 21.8 1.9 14.6 a13.1 13.1 0 0 1 26.2 0 c0 7.2 -6.6 13.4 -13.1 19.9z" fill="#2a2d31" stroke="#f2f2f2" stroke-width="2.6" stroke-linejoin="round"/><circle cx="15" cy="14.6" r="5" fill="none" stroke="#f2f2f2" stroke-width="2.6"/></svg>
<div class="t" id="w_n29" style="left:833.5px;top:1168.7px;font-size:29.50px;font-weight:400;color:#4a5467;transform:scaleX(0.9278);">Well #29</div>
<div class="t" id="w_c29" style="left:1073.5px;top:1172.2px;font-size:22.50px;font-weight:400;color:#9a9ea5;transform:scaleX(0.8492);">35.70259, -120.66318</div>
<svg class="abs" style="left:765px;top:1326px" width="34" height="34" viewBox="0 0 34 34"><g fill="none" stroke="#2563eb" stroke-width="2.6" stroke-linejoin="round">
<path d="M2.5 15 C3 7 9 2 17 2 C25 2 31 7 31.5 15 Z" fill="#0f1a2e"/>
<path d="M2.5 19 H15 V32 C8 32 3 27 2.5 19 Z"/><path d="M19 19 H31.5 C31 27 26 32 19 32 Z"/></g></svg>
<div class="t" id="c_fall" style="left:816.0px;top:1327.0px;font-size:30.50px;font-weight:700;color:#7b8089;transform:scaleX(0.8344);">FALLOWED AREAS</div>
<div class="hr" style="left:763.5px;top:1379.0px;width:527.5px"></div>
<div class="abs" style="left:763.5px;top:1413.5px;width:527px;height:116px;box-sizing:border-box;border:2.5px solid #e9e9ea;border-radius:24px"></div>
<div class="t" id="t_total" style="left:790.5px;top:1457.0px;font-size:29.50px;font-weight:700;color:#f6f6f7;transform:scaleX(0.8706);">TOTAL FALLOWED</div>
<div class="t" id="t_num" style="left:1065.0px;top:1445.3px;font-size:52.50px;font-weight:400;color:#f6f6f7;transform:scaleX(0.8791);">20.93</div>
<div class="t" id="t_acres" style="left:1196.0px;top:1463.0px;font-size:31.50px;font-weight:400;color:#efeff0;transform:scaleX(0.8357);">Acres</div>
<div class="t" id="c_fd" style="left:1439.8px;top:415.5px;font-size:30.50px;font-weight:700;color:#7b8089;transform:scaleX(0.8235);">FIELDS &amp; DETAILS</div>
<div class="hr" style="left:1423.5px;top:467.0px;width:527.0px"></div>
<div class="abs" style="left:1423.5px;top:498.0px;width:527px;height:200px;box-sizing:border-box;border-bottom:2px solid #23272c;border-radius:0 0 22px 22px"></div>
<div class="t" id="i_id0" style="left:1480.0px;top:547.6px;font-size:23.50px;font-weight:400;color:#f2f2f3;transform:scaleX(0.8836);">#113480</div>
<div class="t" id="i_cr0a" style="left:1624.8px;top:532.9px;font-size:23.00px;font-weight:400;color:#8a8e95;transform:scaleX(0.8748);">OTHER SMALL</div>
<div class="t" id="i_cr0b" style="left:1624.8px;top:563.5px;font-size:23.00px;font-weight:400;color:#8a8e95;transform:scaleX(0.8618);">GRAINS</div>
<div class="edit" style="left:1840.8px;top:527.0px"></div>
<div class="t" id="i_ed0" style="left:1865.5px;top:545.3px;font-size:28.00px;font-weight:400;color:#ffffff;transform:scaleX(0.8767);-webkit-text-stroke:0.5px #fff">Edit</div>
<div class="abs" style="left:1441.0px;top:615.0px"><svg width="18" height="22" viewBox="0 0 18 22"><path d="M9 2 C6 6.5 3 10 3 14 a6 6 0 0 0 12 0 C15 10 12 6.5 9 2z" fill="#2b2e32" stroke="#d8d8da" stroke-width="2.2" stroke-linejoin="round"/></svg></div>
<div class="t" id="i_irr0" style="left:1473.5px;top:613.8px;font-size:23.00px;font-weight:400;color:#f0f0f1;transform:scaleX(0.8973);">Irr: Wheel Line</div>
<div class="t" id="i_fr0" style="left:1714.8px;top:613.8px;font-size:23.00px;font-weight:400;color:#f0f0f1;transform:scaleX(0.9053);">Frost: Yes</div>
<div class="t" id="i_sys0" style="left:1439.8px;top:645.2px;font-size:23.00px;font-weight:400;color:#8a8e95;transform:scaleX(0.9177);font-style:italic">System: Drip Irrigation (for Frost Protection)</div>
<div class="abs" style="left:1423.5px;top:696.2px;width:527px;height:200px;box-sizing:border-box;border-bottom:2px solid #23272c;border-radius:0 0 22px 22px"></div>
<div class="t" id="i_id1" style="left:1480.0px;top:745.8px;font-size:23.50px;font-weight:400;color:#f2f2f3;transform:scaleX(0.8836);">#114477</div>
<div class="t" id="i_cr1" style="left:1624.8px;top:746.2px;font-size:23.00px;font-weight:400;color:#8a8e95;transform:scaleX(0.8292);">GRAPES</div>
<div class="edit" style="left:1840.8px;top:725.2px"></div>
<div class="t" id="i_ed1" style="left:1865.5px;top:743.5px;font-size:28.00px;font-weight:400;color:#ffffff;transform:scaleX(0.8767);-webkit-text-stroke:0.5px #fff">Edit</div>
<div class="abs" style="left:1441.0px;top:828.0px"><svg width="18" height="22" viewBox="0 0 18 22"><path d="M9 2 C6 6.5 3 10 3 14 a6 6 0 0 0 12 0 C15 10 12 6.5 9 2z" fill="#2b2e32" stroke="#d8d8da" stroke-width="2.2" stroke-linejoin="round"/></svg></div>
<div class="t" id="i_irr1" style="left:1473.5px;top:812.8px;font-size:23.00px;font-weight:400;color:#f0f0f1;transform:scaleX(0.9012);">Irr: Drip Irrigation</div>
<div class="t" id="i_sur1" style="left:1473.5px;top:843.3px;font-size:23.00px;font-weight:400;color:#f0f0f1;transform:scaleX(0.8669);">(Surface)</div>
<div class="t" id="i_fr1" style="left:1714.8px;top:828.5px;font-size:23.00px;font-weight:400;color:#f0f0f1;transform:scaleX(0.9146);">Frost: No</div>
<div class="abs" style="left:1423.5px;top:894.4px;width:527px;height:200px;box-sizing:border-box;border-bottom:2px solid #23272c;border-radius:0 0 22px 22px"></div>
<div class="t" id="i_id2" style="left:1480.0px;top:944.0px;font-size:23.50px;font-weight:400;color:#f2f2f3;transform:scaleX(0.8836);">#114887</div>
<div class="t" id="i_cr2" style="left:1624.8px;top:944.4px;font-size:23.00px;font-weight:400;color:#8a8e95;transform:scaleX(0.8292);">GRAPES</div>
<div class="edit" style="left:1840.8px;top:923.4px"></div>
<div class="t" id="i_ed2" style="left:1865.5px;top:941.7px;font-size:28.00px;font-weight:400;color:#ffffff;transform:scaleX(0.8767);-webkit-text-stroke:0.5px #fff">Edit</div>
<div class="abs" style="left:1441.0px;top:1026.2px"><svg width="18" height="22" viewBox="0 0 18 22"><path d="M9 2 C6 6.5 3 10 3 14 a6 6 0 0 0 12 0 C15 10 12 6.5 9 2z" fill="#2b2e32" stroke="#d8d8da" stroke-width="2.2" stroke-linejoin="round"/></svg></div>
<div class="t" id="i_irr2" style="left:1473.5px;top:1011.0px;font-size:23.00px;font-weight:400;color:#f0f0f1;transform:scaleX(0.9012);">Irr: Drip Irrigation</div>
<div class="t" id="i_sur2" style="left:1473.5px;top:1041.5px;font-size:23.00px;font-weight:400;color:#f0f0f1;transform:scaleX(0.8669);">(Surface)</div>
<div class="t" id="i_fr2" style="left:1714.8px;top:1026.7px;font-size:23.00px;font-weight:400;color:#f0f0f1;transform:scaleX(0.9146);">Frost: No</div>
<div class="abs" style="left:1423.5px;top:1092.6px;width:527px;height:200px;box-sizing:border-box;border-bottom:2px solid #23272c;border-radius:0 0 22px 22px"></div>
<div class="t" id="i_id3" style="left:1480.0px;top:1142.2px;font-size:23.50px;font-weight:400;color:#f2f2f3;transform:scaleX(0.8836);">#115562</div>
<div class="t" id="i_cr3" style="left:1624.8px;top:1142.6px;font-size:23.00px;font-weight:400;color:#8a8e95;transform:scaleX(0.8292);">GRAPES</div>
<div class="edit" style="left:1840.8px;top:1121.6px"></div>
<div class="t" id="i_ed3" style="left:1865.5px;top:1139.9px;font-size:28.00px;font-weight:400;color:#ffffff;transform:scaleX(0.8767);-webkit-text-stroke:0.5px #fff">Edit</div>
<div class="abs" style="left:1441.0px;top:1224.4px"><svg width="18" height="22" viewBox="0 0 18 22"><path d="M9 2 C6 6.5 3 10 3 14 a6 6 0 0 0 12 0 C15 10 12 6.5 9 2z" fill="#2b2e32" stroke="#d8d8da" stroke-width="2.2" stroke-linejoin="round"/></svg></div>
<div class="t" id="i_irr3" style="left:1473.5px;top:1209.2px;font-size:23.00px;font-weight:400;color:#f0f0f1;transform:scaleX(0.9012);">Irr: Drip Irrigation</div>
<div class="t" id="i_sur3" style="left:1473.5px;top:1239.7px;font-size:23.00px;font-weight:400;color:#f0f0f1;transform:scaleX(0.8669);">(Surface)</div>
<div class="t" id="i_fr3" style="left:1714.8px;top:1224.9px;font-size:23.00px;font-weight:400;color:#f0f0f1;transform:scaleX(0.9146);">Frost: No</div>
<div class="abs" style="left:1423.5px;top:1290.8px;width:527px;height:200px;box-sizing:border-box;border-bottom:2px solid #23272c;border-radius:0 0 22px 22px"></div>
<div class="t" id="i_id4" style="left:1480.0px;top:1340.4px;font-size:23.50px;font-weight:400;color:#f2f2f3;transform:scaleX(0.8836);">#116832</div>
<div class="t" id="i_cr4" style="left:1624.8px;top:1340.8px;font-size:23.00px;font-weight:400;color:#8a8e95;transform:scaleX(0.8292);">GRAPES</div>
<div class="edit" style="left:1840.8px;top:1319.8px"></div>
<div class="t" id="i_ed4" style="left:1865.5px;top:1338.1px;font-size:28.00px;font-weight:400;color:#ffffff;transform:scaleX(0.8767);-webkit-text-stroke:0.5px #fff">Edit</div>
<div class="abs" style="left:1441.0px;top:1422.6px"><svg width="18" height="22" viewBox="0 0 18 22"><path d="M9 2 C6 6.5 3 10 3 14 a6 6 0 0 0 12 0 C15 10 12 6.5 9 2z" fill="#2b2e32" stroke="#d8d8da" stroke-width="2.2" stroke-linejoin="round"/></svg></div>
<div class="t" id="i_irr4" style="left:1473.5px;top:1407.4px;font-size:23.00px;font-weight:400;color:#f0f0f1;transform:scaleX(0.9012);">Irr: Drip Irrigation</div>
<div class="t" id="i_sur4" style="left:1473.5px;top:1437.9px;font-size:23.00px;font-weight:400;color:#f0f0f1;transform:scaleX(0.8669);">(Surface)</div>
<div class="t" id="i_fr4" style="left:1714.8px;top:1423.1px;font-size:23.00px;font-weight:400;color:#f0f0f1;transform:scaleX(0.9146);">Frost: No</div>
<div class="t" id="i6_cr" style="left:1624.5px;top:1522.5px;font-size:23.00px;font-weight:400;color:#8a8e95;transform:scaleX(0.8619);">FALLOW/IDLE</div>
<div class="t" id="i6_id" style="left:1480.0px;top:1539.1px;font-size:23.50px;font-weight:400;color:#f2f2f3;transform:scaleX(0.8836);">#116333</div>
<div class="edit" style="left:1840.8px;top:1518.0px"></div>
<div class="t" id="i6_ed" style="left:1865.5px;top:1536.3px;font-size:28.00px;font-weight:400;color:#ffffff;transform:scaleX(0.8767);-webkit-text-stroke:0.5px #fff">Edit</div>
</div>
</body></html>
